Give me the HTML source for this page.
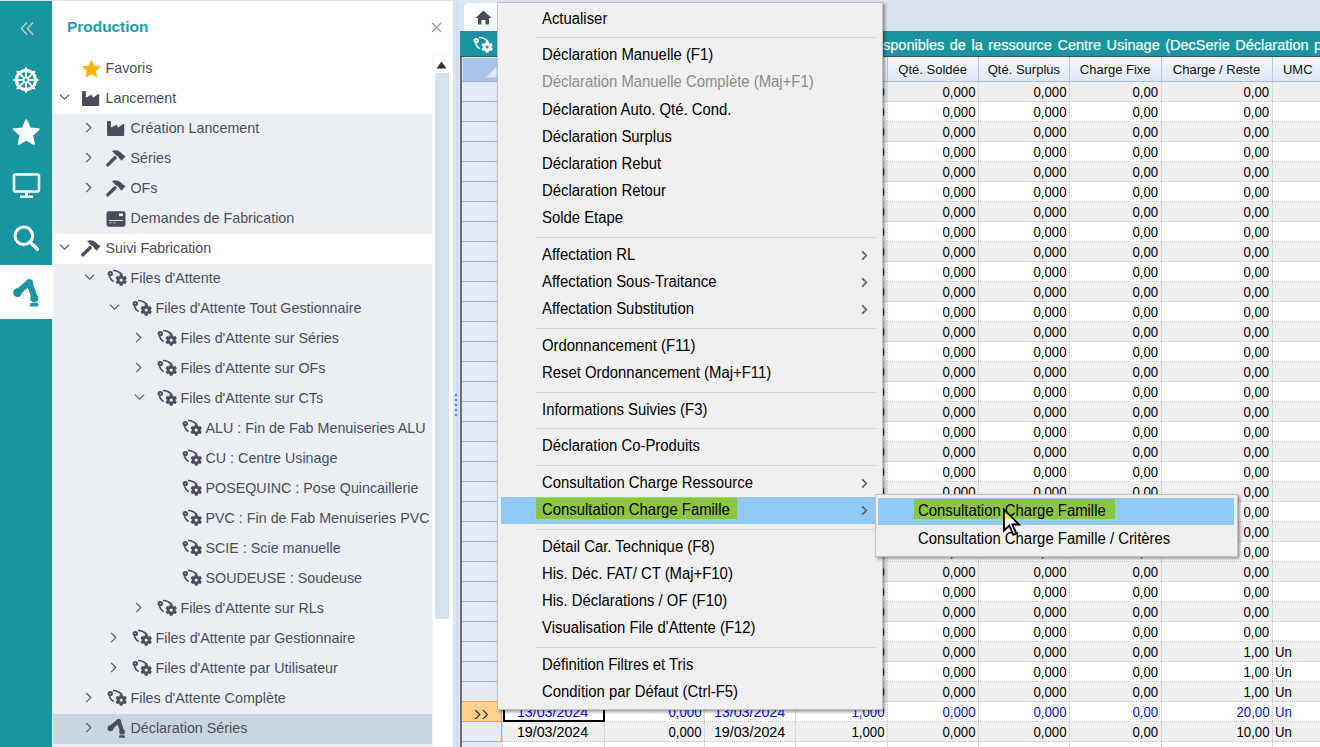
<!DOCTYPE html><html><head><meta charset="utf-8"><style>
*{box-sizing:border-box}
html,body{margin:0;padding:0}
body{width:1320px;height:747px;overflow:hidden;position:relative;background:#dfe6ed;font-family:"Liberation Sans",sans-serif}
.abs{position:absolute}
.sb{position:absolute;left:0;top:1px;width:51.5px;height:746px;background:#1796a2}
.panel{position:absolute;left:51.5px;top:1px;width:401px;height:746px;background:#fff;overflow:hidden}
.tr{position:absolute;left:1.5px;width:380px;height:30px;font-size:14.3px;line-height:30px;color:#4b4e5a;white-space:nowrap}
.tr span{position:absolute;top:-0.5px}
.band{background:#ebeff3}
.sel{background:#c9d5df}
.g{position:absolute;height:20px;font-size:13px;line-height:20px;color:#000;white-space:nowrap}
.c{position:absolute;top:0;height:20px;overflow:hidden;font-size:15px;line-height:20px;white-space:nowrap}
.c span{display:inline-block}
.s1{transform:scaleX(0.95);transform-origin:50% 0}
.s2{transform:scaleX(0.88);transform-origin:100% 0}
.s3{transform:scaleX(0.88);transform-origin:0 0}
.r{text-align:right;padding-right:2.5px}
.m{text-align:center}
.menu{position:absolute;background:#f0f0f0;border:1px solid #c2c2c2;box-shadow:2px 2px 3px rgba(0,0,0,0.4)}
.mi{position:absolute;left:0;height:27.2px;font-size:16px;line-height:27.2px;color:#000;white-space:nowrap}
.mi span.t{position:absolute;left:43.5px;top:-0.8px;transform:scaleX(0.93);transform-origin:0 0}
.sep{position:absolute;left:38px;height:1px;background:#d7d7d7}
.chev{position:absolute}
</style></head><body>

<div class="sb">
<svg class="abs" style="left:19px;top:20px" width="16" height="15" viewBox="0 0 16 15"><path d="M8 1.5 L2.5 7.5 L8 13.5 M14 1.5 L8.5 7.5 L14 13.5" fill="none" stroke="#b9c9cc" stroke-width="1.6"/></svg>
<svg class="abs" style="left:12.3px;top:64.8px" width="28" height="28" viewBox="-13 -13 26 26"><circle cx="0" cy="0" r="10.3" fill="#fff"/><path d="M9.00 2.20 L12.60 0.00 L9.00 -2.20 Z" fill="#fff"/><path d="M4.81 7.92 L8.91 8.91 L7.92 4.81 Z" fill="#fff"/><path d="M-2.20 9.00 L0.00 12.60 L2.20 9.00 Z" fill="#fff"/><path d="M-7.92 4.81 L-8.91 8.91 L-4.81 7.92 Z" fill="#fff"/><path d="M-9.00 -2.20 L-12.60 0.00 L-9.00 2.20 Z" fill="#fff"/><path d="M-4.81 -7.92 L-8.91 -8.91 L-7.92 -4.81 Z" fill="#fff"/><path d="M2.20 -9.00 L-0.00 -12.60 L-2.20 -9.00 Z" fill="#fff"/><path d="M7.92 -4.81 L8.91 -8.91 L4.81 -7.92 Z" fill="#fff"/><path d="M3.31 0.79 L7.53 0.99 L6.03 4.63 L2.90 1.78 Z" fill="#1796a2"/><path d="M1.78 2.90 L4.63 6.03 L0.99 7.53 L0.79 3.31 Z" fill="#1796a2"/><path d="M-0.79 3.31 L-0.99 7.53 L-4.63 6.03 L-1.78 2.90 Z" fill="#1796a2"/><path d="M-2.90 1.78 L-6.03 4.63 L-7.53 0.99 L-3.31 0.79 Z" fill="#1796a2"/><path d="M-3.31 -0.79 L-7.53 -0.99 L-6.03 -4.63 L-2.90 -1.78 Z" fill="#1796a2"/><path d="M-1.78 -2.90 L-4.63 -6.03 L-0.99 -7.53 L-0.79 -3.31 Z" fill="#1796a2"/><path d="M0.79 -3.31 L0.99 -7.53 L4.63 -6.03 L1.78 -2.90 Z" fill="#1796a2"/><path d="M2.90 -1.78 L6.03 -4.63 L7.53 -0.99 L3.31 -0.79 Z" fill="#1796a2"/><circle cx="0" cy="0" r="1.5" fill="#1796a2"/></svg>
<svg class="abs" style="left:12px;top:117px" width="30" height="30" viewBox="0 0 30 30"><path d="M14.30,2.30 L17.83,10.45 L26.66,11.28 L20.01,17.15 L21.94,25.82 L14.30,21.30 L6.66,25.82 L8.59,17.15 L1.94,11.28 L10.77,10.45Z" fill="#fff" stroke="#fff" stroke-width="2" stroke-linejoin="round"/></svg>
<svg class="abs" style="left:12px;top:171px" width="30" height="28" viewBox="0 0 30 28"><rect x="2" y="2.5" width="25" height="17" rx="1.5" fill="none" stroke="#fff" stroke-width="2.6"/><rect x="13" y="20" width="3" height="4" fill="#fff"/><rect x="8" y="23.5" width="13" height="2.4" fill="#fff"/></svg>
<svg class="abs" style="left:11px;top:221.5px" width="30" height="30" viewBox="0 0 30 30"><circle cx="12.8" cy="12.8" r="8.8" fill="none" stroke="#fff" stroke-width="3.1"/><line x1="19" y1="19" x2="26.3" y2="26.3" stroke="#fff" stroke-width="3.5" stroke-linecap="round"/></svg>
<div class="abs" style="left:0;top:263.8px;width:51.5px;height:54px;background:#fff"></div>
</div>
<svg class="abs" style="left:10.80px;top:274.60px" width="30.45" height="33.35" viewBox="0 0 21 23"><g fill="#1796a2" stroke="#1796a2"><circle cx="4.5" cy="12.2" r="3" stroke="none"/><path d="M6.3 10.4 L12.5 5.2" stroke-width="4.2" stroke-linecap="round"/><circle cx="12.7" cy="5.4" r="2.5" stroke="none"/><path d="M12.9 6 L15.9 14.6" stroke-width="4.2" stroke-linecap="round"/><circle cx="16.1" cy="16" r="2.8" stroke="none"/><path d="M13.5 19.2 L18.5 19.2 L19 21.8 L13 21.8Z" stroke="none"/></g></svg>
<div class="panel">
<div class="abs" style="left:15.6px;top:15.5px;font-size:15.4px;font-weight:bold;color:#1c9cb2;line-height:20px">Production</div>
<svg class="abs" style="left:379.5px;top:21px" width="11" height="11" viewBox="0 0 11 11"><path d="M1 1 L10 10 M10 1 L1 10" stroke="#949ca3" stroke-width="1.2"/></svg>
<div class="tr " style="top:52.5px">
<svg class="abs" style="left:28.5px;top:5.0px" width="20" height="20" viewBox="0 0 20 20"><path d="M9.30,2.00 L11.65,7.36 L17.48,7.94 L13.10,11.84 L14.35,17.56 L9.30,14.60 L4.25,17.56 L5.50,11.84 L1.12,7.94 L6.95,7.36Z" fill="#ffb400" stroke="#ffb400" stroke-width="1.2" stroke-linejoin="round"/></svg>
<span style="left:52.5px">Favoris</span>
</div>
<div class="tr " style="top:82.5px">
<svg class="abs" style="left:6.0px;top:10.5px" width="12" height="8" viewBox="0 0 12 8"><path d="M1 0.6 L5.6 5.2 L10.2 0.6" fill="none" stroke="#5a5e6a" stroke-width="1.2"/></svg>
<svg class="abs" style="left:29.0px;top:7.3px" width="19" height="16" viewBox="0 0 19 16"><path d="M0 1 Q0 0 1 0 L2.9 0 Q3.9 0 3.9 1 L3.9 6.4 L9.2 3.9 Q9.7 3.7 10 4.2 L11 6.4 L16.5 3 Q17.2 2.7 17.2 3.5 L17.2 14 Q17.2 15 16.2 15 L1 15 Q0 15 0 14Z" fill="#4a4e5b"/></svg>
<span style="left:52.5px">Lancement</span>
</div>
<div class="tr band" style="top:112.5px">
<svg class="abs" style="left:32.0px;top:8.5px" width="8" height="12" viewBox="0 0 8 12"><path d="M1.2 1 L5.8 5.6 L1.2 10.2" fill="none" stroke="#5a5e6a" stroke-width="1.2"/></svg>
<svg class="abs" style="left:54.0px;top:7.3px" width="19" height="16" viewBox="0 0 19 16"><path d="M0 1 Q0 0 1 0 L2.9 0 Q3.9 0 3.9 1 L3.9 6.4 L9.2 3.9 Q9.7 3.7 10 4.2 L11 6.4 L16.5 3 Q17.2 2.7 17.2 3.5 L17.2 14 Q17.2 15 16.2 15 L1 15 Q0 15 0 14Z" fill="#4a4e5b"/></svg>
<span style="left:77.5px">Création Lancement</span>
</div>
<div class="tr band" style="top:142.5px">
<svg class="abs" style="left:32.0px;top:8.5px" width="8" height="12" viewBox="0 0 8 12"><path d="M1.2 1 L5.8 5.6 L1.2 10.2" fill="none" stroke="#5a5e6a" stroke-width="1.2"/></svg>
<svg class="abs" style="left:51.0px;top:3.5px" width="23" height="21" viewBox="0 0 23 21"><path d="M3.8 17.9 L11 10.8" stroke="#4a4e5b" stroke-width="3.4" stroke-linecap="round"/><path d="M8 4.3 Q12 1.5 17 5.5 L18.3 7 L21.5 9.3 L17.5 13.8 L15.5 11.5 Q13 8 11.8 8.3 Q10 5.6 8 4.3Z" fill="#4a4e5b"/></svg>
<span style="left:77.5px">Séries</span>
</div>
<div class="tr band" style="top:172.5px">
<svg class="abs" style="left:32.0px;top:8.5px" width="8" height="12" viewBox="0 0 8 12"><path d="M1.2 1 L5.8 5.6 L1.2 10.2" fill="none" stroke="#5a5e6a" stroke-width="1.2"/></svg>
<svg class="abs" style="left:51.0px;top:3.5px" width="23" height="21" viewBox="0 0 23 21"><path d="M3.8 17.9 L11 10.8" stroke="#4a4e5b" stroke-width="3.4" stroke-linecap="round"/><path d="M8 4.3 Q12 1.5 17 5.5 L18.3 7 L21.5 9.3 L17.5 13.8 L15.5 11.5 Q13 8 11.8 8.3 Q10 5.6 8 4.3Z" fill="#4a4e5b"/></svg>
<span style="left:77.5px">OFs</span>
</div>
<div class="tr band" style="top:202.5px">
<svg class="abs" style="left:52.8px;top:7.0px" width="20" height="16" viewBox="0 0 20 16"><rect x="0.5" y="0.3" width="19" height="15.4" rx="2" fill="#4a4e5b"/><rect x="13" y="2.5" width="4" height="2.6" fill="#fff" opacity="0.9"/><rect x="3" y="9" width="14" height="1" fill="#fff" opacity="0.8"/><rect x="3" y="11.3" width="3" height="1" fill="#fff" opacity="0.5"/><rect x="7" y="11.3" width="3" height="1" fill="#fff" opacity="0.5"/></svg>
<span style="left:77.5px">Demandes de Fabrication</span>
</div>
<div class="tr " style="top:232.5px">
<svg class="abs" style="left:6.0px;top:10.5px" width="12" height="8" viewBox="0 0 12 8"><path d="M1 0.6 L5.6 5.2 L10.2 0.6" fill="none" stroke="#5a5e6a" stroke-width="1.2"/></svg>
<svg class="abs" style="left:26.0px;top:3.5px" width="23" height="21" viewBox="0 0 23 21"><path d="M3.8 17.9 L11 10.8" stroke="#4a4e5b" stroke-width="3.4" stroke-linecap="round"/><path d="M8 4.3 Q12 1.5 17 5.5 L18.3 7 L21.5 9.3 L17.5 13.8 L15.5 11.5 Q13 8 11.8 8.3 Q10 5.6 8 4.3Z" fill="#4a4e5b"/></svg>
<span style="left:52.5px">Suivi Fabrication</span>
</div>
<div class="tr band" style="top:262.5px">
<svg class="abs" style="left:31.0px;top:10.5px" width="12" height="8" viewBox="0 0 12 8"><path d="M1 0.6 L5.6 5.2 L10.2 0.6" fill="none" stroke="#5a5e6a" stroke-width="1.2"/></svg>
<svg class="abs" style="left:53.0px;top:4.5px" width="23" height="20" viewBox="0 0 23 20"><path d="M7 2.4 Q11.5 2.2 16 6.4" fill="none" stroke="#4a4e5b" stroke-width="1.50"/><path d="M3.3 8.3 Q4.6 11.6 7.6 13.6" fill="none" stroke="#4a4e5b" stroke-width="1.70"/><circle cx="4.3" cy="5.6" r="2.7" fill="#4a4e5b"/><circle cx="4.3" cy="5.6" r="0.7" fill="#ebeff3"/><path d="M13.45,8.17 L13.87,6.35 L16.53,6.35 L16.95,8.17 L17.73,8.62 L19.51,8.08 L20.84,10.38 L19.48,11.65 L19.48,12.55 L20.84,13.82 L19.51,16.12 L17.73,15.58 L16.95,16.03 L16.53,17.85 L13.87,17.85 L13.45,16.03 L12.67,15.58 L10.89,16.12 L9.56,13.82 L10.92,12.55 L10.92,11.65 L9.56,10.38 L10.89,8.08 L12.67,8.62Z" fill="#4a4e5b"/><circle cx="15.2" cy="12.1" r="1.6" fill="#ebeff3"/></svg>
<span style="left:77.5px">Files d&#39;Attente</span>
</div>
<div class="tr band" style="top:292.5px">
<svg class="abs" style="left:56.0px;top:10.5px" width="12" height="8" viewBox="0 0 12 8"><path d="M1 0.6 L5.6 5.2 L10.2 0.6" fill="none" stroke="#5a5e6a" stroke-width="1.2"/></svg>
<svg class="abs" style="left:78.0px;top:4.5px" width="23" height="20" viewBox="0 0 23 20"><path d="M7 2.4 Q11.5 2.2 16 6.4" fill="none" stroke="#4a4e5b" stroke-width="1.50"/><path d="M3.3 8.3 Q4.6 11.6 7.6 13.6" fill="none" stroke="#4a4e5b" stroke-width="1.70"/><circle cx="4.3" cy="5.6" r="2.7" fill="#4a4e5b"/><circle cx="4.3" cy="5.6" r="0.7" fill="#ebeff3"/><path d="M13.45,8.17 L13.87,6.35 L16.53,6.35 L16.95,8.17 L17.73,8.62 L19.51,8.08 L20.84,10.38 L19.48,11.65 L19.48,12.55 L20.84,13.82 L19.51,16.12 L17.73,15.58 L16.95,16.03 L16.53,17.85 L13.87,17.85 L13.45,16.03 L12.67,15.58 L10.89,16.12 L9.56,13.82 L10.92,12.55 L10.92,11.65 L9.56,10.38 L10.89,8.08 L12.67,8.62Z" fill="#4a4e5b"/><circle cx="15.2" cy="12.1" r="1.6" fill="#ebeff3"/></svg>
<span style="left:102.5px">Files d&#39;Attente Tout Gestionnaire</span>
</div>
<div class="tr band" style="top:322.5px">
<svg class="abs" style="left:82.0px;top:8.5px" width="8" height="12" viewBox="0 0 8 12"><path d="M1.2 1 L5.8 5.6 L1.2 10.2" fill="none" stroke="#5a5e6a" stroke-width="1.2"/></svg>
<svg class="abs" style="left:103.0px;top:4.5px" width="23" height="20" viewBox="0 0 23 20"><path d="M7 2.4 Q11.5 2.2 16 6.4" fill="none" stroke="#4a4e5b" stroke-width="1.50"/><path d="M3.3 8.3 Q4.6 11.6 7.6 13.6" fill="none" stroke="#4a4e5b" stroke-width="1.70"/><circle cx="4.3" cy="5.6" r="2.7" fill="#4a4e5b"/><circle cx="4.3" cy="5.6" r="0.7" fill="#ebeff3"/><path d="M13.45,8.17 L13.87,6.35 L16.53,6.35 L16.95,8.17 L17.73,8.62 L19.51,8.08 L20.84,10.38 L19.48,11.65 L19.48,12.55 L20.84,13.82 L19.51,16.12 L17.73,15.58 L16.95,16.03 L16.53,17.85 L13.87,17.85 L13.45,16.03 L12.67,15.58 L10.89,16.12 L9.56,13.82 L10.92,12.55 L10.92,11.65 L9.56,10.38 L10.89,8.08 L12.67,8.62Z" fill="#4a4e5b"/><circle cx="15.2" cy="12.1" r="1.6" fill="#ebeff3"/></svg>
<span style="left:127.5px">Files d&#39;Attente sur Séries</span>
</div>
<div class="tr band" style="top:352.5px">
<svg class="abs" style="left:82.0px;top:8.5px" width="8" height="12" viewBox="0 0 8 12"><path d="M1.2 1 L5.8 5.6 L1.2 10.2" fill="none" stroke="#5a5e6a" stroke-width="1.2"/></svg>
<svg class="abs" style="left:103.0px;top:4.5px" width="23" height="20" viewBox="0 0 23 20"><path d="M7 2.4 Q11.5 2.2 16 6.4" fill="none" stroke="#4a4e5b" stroke-width="1.50"/><path d="M3.3 8.3 Q4.6 11.6 7.6 13.6" fill="none" stroke="#4a4e5b" stroke-width="1.70"/><circle cx="4.3" cy="5.6" r="2.7" fill="#4a4e5b"/><circle cx="4.3" cy="5.6" r="0.7" fill="#ebeff3"/><path d="M13.45,8.17 L13.87,6.35 L16.53,6.35 L16.95,8.17 L17.73,8.62 L19.51,8.08 L20.84,10.38 L19.48,11.65 L19.48,12.55 L20.84,13.82 L19.51,16.12 L17.73,15.58 L16.95,16.03 L16.53,17.85 L13.87,17.85 L13.45,16.03 L12.67,15.58 L10.89,16.12 L9.56,13.82 L10.92,12.55 L10.92,11.65 L9.56,10.38 L10.89,8.08 L12.67,8.62Z" fill="#4a4e5b"/><circle cx="15.2" cy="12.1" r="1.6" fill="#ebeff3"/></svg>
<span style="left:127.5px">Files d&#39;Attente sur OFs</span>
</div>
<div class="tr band" style="top:382.5px">
<svg class="abs" style="left:81.0px;top:10.5px" width="12" height="8" viewBox="0 0 12 8"><path d="M1 0.6 L5.6 5.2 L10.2 0.6" fill="none" stroke="#5a5e6a" stroke-width="1.2"/></svg>
<svg class="abs" style="left:103.0px;top:4.5px" width="23" height="20" viewBox="0 0 23 20"><path d="M7 2.4 Q11.5 2.2 16 6.4" fill="none" stroke="#4a4e5b" stroke-width="1.50"/><path d="M3.3 8.3 Q4.6 11.6 7.6 13.6" fill="none" stroke="#4a4e5b" stroke-width="1.70"/><circle cx="4.3" cy="5.6" r="2.7" fill="#4a4e5b"/><circle cx="4.3" cy="5.6" r="0.7" fill="#ebeff3"/><path d="M13.45,8.17 L13.87,6.35 L16.53,6.35 L16.95,8.17 L17.73,8.62 L19.51,8.08 L20.84,10.38 L19.48,11.65 L19.48,12.55 L20.84,13.82 L19.51,16.12 L17.73,15.58 L16.95,16.03 L16.53,17.85 L13.87,17.85 L13.45,16.03 L12.67,15.58 L10.89,16.12 L9.56,13.82 L10.92,12.55 L10.92,11.65 L9.56,10.38 L10.89,8.08 L12.67,8.62Z" fill="#4a4e5b"/><circle cx="15.2" cy="12.1" r="1.6" fill="#ebeff3"/></svg>
<span style="left:127.5px">Files d&#39;Attente sur CTs</span>
</div>
<div class="tr band" style="top:412.5px">
<svg class="abs" style="left:128.0px;top:4.5px" width="23" height="20" viewBox="0 0 23 20"><path d="M7 2.4 Q11.5 2.2 16 6.4" fill="none" stroke="#4a4e5b" stroke-width="1.50"/><path d="M3.3 8.3 Q4.6 11.6 7.6 13.6" fill="none" stroke="#4a4e5b" stroke-width="1.70"/><circle cx="4.3" cy="5.6" r="2.7" fill="#4a4e5b"/><circle cx="4.3" cy="5.6" r="0.7" fill="#ebeff3"/><path d="M13.45,8.17 L13.87,6.35 L16.53,6.35 L16.95,8.17 L17.73,8.62 L19.51,8.08 L20.84,10.38 L19.48,11.65 L19.48,12.55 L20.84,13.82 L19.51,16.12 L17.73,15.58 L16.95,16.03 L16.53,17.85 L13.87,17.85 L13.45,16.03 L12.67,15.58 L10.89,16.12 L9.56,13.82 L10.92,12.55 L10.92,11.65 L9.56,10.38 L10.89,8.08 L12.67,8.62Z" fill="#4a4e5b"/><circle cx="15.2" cy="12.1" r="1.6" fill="#ebeff3"/></svg>
<span style="left:152.5px">ALU : Fin de Fab Menuiseries ALU</span>
</div>
<div class="tr band" style="top:442.5px">
<svg class="abs" style="left:128.0px;top:4.5px" width="23" height="20" viewBox="0 0 23 20"><path d="M7 2.4 Q11.5 2.2 16 6.4" fill="none" stroke="#4a4e5b" stroke-width="1.50"/><path d="M3.3 8.3 Q4.6 11.6 7.6 13.6" fill="none" stroke="#4a4e5b" stroke-width="1.70"/><circle cx="4.3" cy="5.6" r="2.7" fill="#4a4e5b"/><circle cx="4.3" cy="5.6" r="0.7" fill="#ebeff3"/><path d="M13.45,8.17 L13.87,6.35 L16.53,6.35 L16.95,8.17 L17.73,8.62 L19.51,8.08 L20.84,10.38 L19.48,11.65 L19.48,12.55 L20.84,13.82 L19.51,16.12 L17.73,15.58 L16.95,16.03 L16.53,17.85 L13.87,17.85 L13.45,16.03 L12.67,15.58 L10.89,16.12 L9.56,13.82 L10.92,12.55 L10.92,11.65 L9.56,10.38 L10.89,8.08 L12.67,8.62Z" fill="#4a4e5b"/><circle cx="15.2" cy="12.1" r="1.6" fill="#ebeff3"/></svg>
<span style="left:152.5px">CU : Centre Usinage</span>
</div>
<div class="tr band" style="top:472.5px">
<svg class="abs" style="left:128.0px;top:4.5px" width="23" height="20" viewBox="0 0 23 20"><path d="M7 2.4 Q11.5 2.2 16 6.4" fill="none" stroke="#4a4e5b" stroke-width="1.50"/><path d="M3.3 8.3 Q4.6 11.6 7.6 13.6" fill="none" stroke="#4a4e5b" stroke-width="1.70"/><circle cx="4.3" cy="5.6" r="2.7" fill="#4a4e5b"/><circle cx="4.3" cy="5.6" r="0.7" fill="#ebeff3"/><path d="M13.45,8.17 L13.87,6.35 L16.53,6.35 L16.95,8.17 L17.73,8.62 L19.51,8.08 L20.84,10.38 L19.48,11.65 L19.48,12.55 L20.84,13.82 L19.51,16.12 L17.73,15.58 L16.95,16.03 L16.53,17.85 L13.87,17.85 L13.45,16.03 L12.67,15.58 L10.89,16.12 L9.56,13.82 L10.92,12.55 L10.92,11.65 L9.56,10.38 L10.89,8.08 L12.67,8.62Z" fill="#4a4e5b"/><circle cx="15.2" cy="12.1" r="1.6" fill="#ebeff3"/></svg>
<span style="left:152.5px">POSEQUINC : Pose Quincaillerie</span>
</div>
<div class="tr band" style="top:502.5px">
<svg class="abs" style="left:128.0px;top:4.5px" width="23" height="20" viewBox="0 0 23 20"><path d="M7 2.4 Q11.5 2.2 16 6.4" fill="none" stroke="#4a4e5b" stroke-width="1.50"/><path d="M3.3 8.3 Q4.6 11.6 7.6 13.6" fill="none" stroke="#4a4e5b" stroke-width="1.70"/><circle cx="4.3" cy="5.6" r="2.7" fill="#4a4e5b"/><circle cx="4.3" cy="5.6" r="0.7" fill="#ebeff3"/><path d="M13.45,8.17 L13.87,6.35 L16.53,6.35 L16.95,8.17 L17.73,8.62 L19.51,8.08 L20.84,10.38 L19.48,11.65 L19.48,12.55 L20.84,13.82 L19.51,16.12 L17.73,15.58 L16.95,16.03 L16.53,17.85 L13.87,17.85 L13.45,16.03 L12.67,15.58 L10.89,16.12 L9.56,13.82 L10.92,12.55 L10.92,11.65 L9.56,10.38 L10.89,8.08 L12.67,8.62Z" fill="#4a4e5b"/><circle cx="15.2" cy="12.1" r="1.6" fill="#ebeff3"/></svg>
<span style="left:152.5px">PVC : Fin de Fab Menuiseries PVC</span>
</div>
<div class="tr band" style="top:532.5px">
<svg class="abs" style="left:128.0px;top:4.5px" width="23" height="20" viewBox="0 0 23 20"><path d="M7 2.4 Q11.5 2.2 16 6.4" fill="none" stroke="#4a4e5b" stroke-width="1.50"/><path d="M3.3 8.3 Q4.6 11.6 7.6 13.6" fill="none" stroke="#4a4e5b" stroke-width="1.70"/><circle cx="4.3" cy="5.6" r="2.7" fill="#4a4e5b"/><circle cx="4.3" cy="5.6" r="0.7" fill="#ebeff3"/><path d="M13.45,8.17 L13.87,6.35 L16.53,6.35 L16.95,8.17 L17.73,8.62 L19.51,8.08 L20.84,10.38 L19.48,11.65 L19.48,12.55 L20.84,13.82 L19.51,16.12 L17.73,15.58 L16.95,16.03 L16.53,17.85 L13.87,17.85 L13.45,16.03 L12.67,15.58 L10.89,16.12 L9.56,13.82 L10.92,12.55 L10.92,11.65 L9.56,10.38 L10.89,8.08 L12.67,8.62Z" fill="#4a4e5b"/><circle cx="15.2" cy="12.1" r="1.6" fill="#ebeff3"/></svg>
<span style="left:152.5px">SCIE : Scie manuelle</span>
</div>
<div class="tr band" style="top:562.5px">
<svg class="abs" style="left:128.0px;top:4.5px" width="23" height="20" viewBox="0 0 23 20"><path d="M7 2.4 Q11.5 2.2 16 6.4" fill="none" stroke="#4a4e5b" stroke-width="1.50"/><path d="M3.3 8.3 Q4.6 11.6 7.6 13.6" fill="none" stroke="#4a4e5b" stroke-width="1.70"/><circle cx="4.3" cy="5.6" r="2.7" fill="#4a4e5b"/><circle cx="4.3" cy="5.6" r="0.7" fill="#ebeff3"/><path d="M13.45,8.17 L13.87,6.35 L16.53,6.35 L16.95,8.17 L17.73,8.62 L19.51,8.08 L20.84,10.38 L19.48,11.65 L19.48,12.55 L20.84,13.82 L19.51,16.12 L17.73,15.58 L16.95,16.03 L16.53,17.85 L13.87,17.85 L13.45,16.03 L12.67,15.58 L10.89,16.12 L9.56,13.82 L10.92,12.55 L10.92,11.65 L9.56,10.38 L10.89,8.08 L12.67,8.62Z" fill="#4a4e5b"/><circle cx="15.2" cy="12.1" r="1.6" fill="#ebeff3"/></svg>
<span style="left:152.5px">SOUDEUSE : Soudeuse</span>
</div>
<div class="tr band" style="top:592.5px">
<svg class="abs" style="left:82.0px;top:8.5px" width="8" height="12" viewBox="0 0 8 12"><path d="M1.2 1 L5.8 5.6 L1.2 10.2" fill="none" stroke="#5a5e6a" stroke-width="1.2"/></svg>
<svg class="abs" style="left:103.0px;top:4.5px" width="23" height="20" viewBox="0 0 23 20"><path d="M7 2.4 Q11.5 2.2 16 6.4" fill="none" stroke="#4a4e5b" stroke-width="1.50"/><path d="M3.3 8.3 Q4.6 11.6 7.6 13.6" fill="none" stroke="#4a4e5b" stroke-width="1.70"/><circle cx="4.3" cy="5.6" r="2.7" fill="#4a4e5b"/><circle cx="4.3" cy="5.6" r="0.7" fill="#ebeff3"/><path d="M13.45,8.17 L13.87,6.35 L16.53,6.35 L16.95,8.17 L17.73,8.62 L19.51,8.08 L20.84,10.38 L19.48,11.65 L19.48,12.55 L20.84,13.82 L19.51,16.12 L17.73,15.58 L16.95,16.03 L16.53,17.85 L13.87,17.85 L13.45,16.03 L12.67,15.58 L10.89,16.12 L9.56,13.82 L10.92,12.55 L10.92,11.65 L9.56,10.38 L10.89,8.08 L12.67,8.62Z" fill="#4a4e5b"/><circle cx="15.2" cy="12.1" r="1.6" fill="#ebeff3"/></svg>
<span style="left:127.5px">Files d&#39;Attente sur RLs</span>
</div>
<div class="tr band" style="top:622.5px">
<svg class="abs" style="left:57.0px;top:8.5px" width="8" height="12" viewBox="0 0 8 12"><path d="M1.2 1 L5.8 5.6 L1.2 10.2" fill="none" stroke="#5a5e6a" stroke-width="1.2"/></svg>
<svg class="abs" style="left:78.0px;top:4.5px" width="23" height="20" viewBox="0 0 23 20"><path d="M7 2.4 Q11.5 2.2 16 6.4" fill="none" stroke="#4a4e5b" stroke-width="1.50"/><path d="M3.3 8.3 Q4.6 11.6 7.6 13.6" fill="none" stroke="#4a4e5b" stroke-width="1.70"/><circle cx="4.3" cy="5.6" r="2.7" fill="#4a4e5b"/><circle cx="4.3" cy="5.6" r="0.7" fill="#ebeff3"/><path d="M13.45,8.17 L13.87,6.35 L16.53,6.35 L16.95,8.17 L17.73,8.62 L19.51,8.08 L20.84,10.38 L19.48,11.65 L19.48,12.55 L20.84,13.82 L19.51,16.12 L17.73,15.58 L16.95,16.03 L16.53,17.85 L13.87,17.85 L13.45,16.03 L12.67,15.58 L10.89,16.12 L9.56,13.82 L10.92,12.55 L10.92,11.65 L9.56,10.38 L10.89,8.08 L12.67,8.62Z" fill="#4a4e5b"/><circle cx="15.2" cy="12.1" r="1.6" fill="#ebeff3"/></svg>
<span style="left:102.5px">Files d&#39;Attente par Gestionnaire</span>
</div>
<div class="tr band" style="top:652.5px">
<svg class="abs" style="left:57.0px;top:8.5px" width="8" height="12" viewBox="0 0 8 12"><path d="M1.2 1 L5.8 5.6 L1.2 10.2" fill="none" stroke="#5a5e6a" stroke-width="1.2"/></svg>
<svg class="abs" style="left:78.0px;top:4.5px" width="23" height="20" viewBox="0 0 23 20"><path d="M7 2.4 Q11.5 2.2 16 6.4" fill="none" stroke="#4a4e5b" stroke-width="1.50"/><path d="M3.3 8.3 Q4.6 11.6 7.6 13.6" fill="none" stroke="#4a4e5b" stroke-width="1.70"/><circle cx="4.3" cy="5.6" r="2.7" fill="#4a4e5b"/><circle cx="4.3" cy="5.6" r="0.7" fill="#ebeff3"/><path d="M13.45,8.17 L13.87,6.35 L16.53,6.35 L16.95,8.17 L17.73,8.62 L19.51,8.08 L20.84,10.38 L19.48,11.65 L19.48,12.55 L20.84,13.82 L19.51,16.12 L17.73,15.58 L16.95,16.03 L16.53,17.85 L13.87,17.85 L13.45,16.03 L12.67,15.58 L10.89,16.12 L9.56,13.82 L10.92,12.55 L10.92,11.65 L9.56,10.38 L10.89,8.08 L12.67,8.62Z" fill="#4a4e5b"/><circle cx="15.2" cy="12.1" r="1.6" fill="#ebeff3"/></svg>
<span style="left:102.5px">Files d&#39;Attente par Utilisateur</span>
</div>
<div class="tr band" style="top:682.5px">
<svg class="abs" style="left:32.0px;top:8.5px" width="8" height="12" viewBox="0 0 8 12"><path d="M1.2 1 L5.8 5.6 L1.2 10.2" fill="none" stroke="#5a5e6a" stroke-width="1.2"/></svg>
<svg class="abs" style="left:53.0px;top:4.5px" width="23" height="20" viewBox="0 0 23 20"><path d="M7 2.4 Q11.5 2.2 16 6.4" fill="none" stroke="#4a4e5b" stroke-width="1.50"/><path d="M3.3 8.3 Q4.6 11.6 7.6 13.6" fill="none" stroke="#4a4e5b" stroke-width="1.70"/><circle cx="4.3" cy="5.6" r="2.7" fill="#4a4e5b"/><circle cx="4.3" cy="5.6" r="0.7" fill="#ebeff3"/><path d="M13.45,8.17 L13.87,6.35 L16.53,6.35 L16.95,8.17 L17.73,8.62 L19.51,8.08 L20.84,10.38 L19.48,11.65 L19.48,12.55 L20.84,13.82 L19.51,16.12 L17.73,15.58 L16.95,16.03 L16.53,17.85 L13.87,17.85 L13.45,16.03 L12.67,15.58 L10.89,16.12 L9.56,13.82 L10.92,12.55 L10.92,11.65 L9.56,10.38 L10.89,8.08 L12.67,8.62Z" fill="#4a4e5b"/><circle cx="15.2" cy="12.1" r="1.6" fill="#ebeff3"/></svg>
<span style="left:77.5px">Files d&#39;Attente Complète</span>
</div>
<div class="tr sel" style="top:712.5px">
<svg class="abs" style="left:32.0px;top:8.5px" width="8" height="12" viewBox="0 0 8 12"><path d="M1.2 1 L5.8 5.6 L1.2 10.2" fill="none" stroke="#5a5e6a" stroke-width="1.2"/></svg>
<svg class="abs" style="left:53.00px;top:2.50px" width="21.00" height="23.00" viewBox="0 0 21 23"><g fill="#4a4e5b" stroke="#4a4e5b"><circle cx="4.5" cy="12.2" r="3" stroke="none"/><path d="M6.3 10.4 L12.5 5.2" stroke-width="4.2" stroke-linecap="round"/><circle cx="12.7" cy="5.4" r="2.5" stroke="none"/><path d="M12.9 6 L15.9 14.6" stroke-width="4.2" stroke-linecap="round"/><circle cx="16.1" cy="16" r="2.8" stroke="none"/><path d="M13.5 19.2 L18.5 19.2 L19 21.8 L13 21.8Z" stroke="none"/></g></svg>
<span style="left:77.5px">Déclaration Séries</span>
</div>
<div class="tr band" style="top:742.5px">
</div>
<div class="abs" style="left:380px;top:52.5px;width:21px;height:694px;background:#fff;border-left:1px solid #f4f6f8;border-top:1px solid #f4f6f8"></div>
<svg class="abs" style="left:384.5px;top:60px" width="11" height="8" viewBox="0 0 11 8"><path d="M0.5 7.5 L5.5 0.5 L10.5 7.5Z" fill="#333"/></svg>
<div class="abs" style="left:383.7px;top:72.2px;width:13.8px;height:546.2px;background:#d8e2ea"></div>
</div>
<div class="abs" style="left:452.5px;top:0;width:3.5px;height:747px;background:#dde5ec"></div>
<div class="abs" style="left:456px;top:1px;width:2.5px;height:746px;background:#cfe0f6"></div>
<div class="abs" style="left:454.5px;top:394.3px;width:2px;height:2px;background:#3d7fd8;transform:rotate(-45deg)"></div>
<div class="abs" style="left:454.5px;top:399.3px;width:2px;height:2px;background:#3d7fd8;transform:rotate(-45deg)"></div>
<div class="abs" style="left:454.5px;top:404.3px;width:2px;height:2px;background:#3d7fd8;transform:rotate(-45deg)"></div>
<div class="abs" style="left:454.5px;top:409.3px;width:2px;height:2px;background:#3d7fd8;transform:rotate(-45deg)"></div>
<div class="abs" style="left:454.5px;top:414.3px;width:2px;height:2px;background:#3d7fd8;transform:rotate(-45deg)"></div>
<div class="abs" style="left:460px;top:1px;width:860px;height:30px;background:#dae3ec"></div>
<div class="abs" style="left:463.5px;top:2.5px;width:60px;height:28.5px;background:#fff;border-radius:5px 0 0 0"></div>
<svg class="abs" style="left:475px;top:10px" width="17" height="15" viewBox="0 0 17 15"><path d="M8.5 0.5 L16.5 8 L14 8 L14 14.5 L10.5 14.5 L10.5 10 L6.5 10 L6.5 14.5 L3 14.5 L3 8 L0.5 8Z" fill="#4a4e5b"/></svg>
<div class="abs" style="left:460px;top:31px;width:860px;height:25.5px;background:#1796a2;overflow:hidden">
<svg class="abs" style="left:12.0px;top:4.0px" width="23" height="20" viewBox="0 0 23 20"><path d="M7 2.4 Q11.5 2.2 16 6.4" fill="none" stroke="#fff" stroke-width="1.35"/><path d="M3.3 8.3 Q4.6 11.6 7.6 13.6" fill="none" stroke="#fff" stroke-width="1.53"/><circle cx="4.3" cy="5.6" r="2.7" fill="#fff"/><circle cx="4.3" cy="5.6" r="0.7" fill="#1796a2"/><path d="M13.45,8.17 L13.87,6.35 L16.53,6.35 L16.95,8.17 L17.73,8.62 L19.51,8.08 L20.84,10.38 L19.48,11.65 L19.48,12.55 L20.84,13.82 L19.51,16.12 L17.73,15.58 L16.95,16.03 L16.53,17.85 L13.87,17.85 L13.45,16.03 L12.67,15.58 L10.89,16.12 L9.56,13.82 L10.92,12.55 L10.92,11.65 L9.56,10.38 L10.89,8.08 L12.67,8.62Z" fill="#fff"/><circle cx="15.2" cy="12.1" r="1.6" fill="#1796a2"/></svg>
<div class="abs" style="left:40px;top:1.5px;line-height:25px;font-size:14.5px;color:#f4f8f0;white-space:nowrap;word-spacing:1.5px">Files d&#39;Attente Opérations di</div>
<div class="abs" style="left:423px;top:1.5px;line-height:25px;font-size:14.5px;color:#f4f8f0;white-space:nowrap;word-spacing:1.5px;-webkit-text-stroke:0.25px #f4f8f0">sponibles de la ressource Centre Usinage (DecSerie Déclaration par Série)</div>
</div>
<div class="abs" style="left:460px;top:56px;width:860px;height:1px;background:#3b5a60"></div>
<div class="abs" style="left:460px;top:57px;width:860px;height:690px;background:#fff;overflow:hidden">
<div class="abs" style="left:0;top:0;width:1.5px;height:690px;background:#6f6f6f"></div>
<div class="abs" style="left:1.5px;top:0;width:40.5px;height:25px;background:#a9c4e9;border-top:1.6px solid #d6e2f2;border-left:1px solid #d6e2f2"></div>
<svg class="abs" style="left:26px;top:10px" width="11" height="11" viewBox="0 0 11 11"><path d="M10.5 0 L10.5 10.5 L0 10.5Z" fill="#e2eaf6"/></svg>
<div class="abs" style="left:42px;top:0;width:818px;height:24.5px;background:linear-gradient(#f7f9fc,#dde6f1);border-bottom:1px solid #a6bdd6"></div>
<div class="abs" style="left:1.5px;top:24px;width:40.5px;height:1px;background:#9db3cc"></div>
<div class="abs" style="left:42.0px;top:0;width:102.0px;height:24.5px;font-size:13px;line-height:26px;color:#111;text-align:center;white-space:nowrap;overflow:hidden">Date Début</div>
<div class="abs" style="left:143.5px;top:0;width:1px;height:24.5px;background:#b3c7dc"></div>
<div class="abs" style="left:144.0px;top:0;width:100.5px;height:24.5px;font-size:13px;line-height:26px;color:#111;text-align:center;white-space:nowrap;overflow:hidden">Qté. Prévue</div>
<div class="abs" style="left:244.0px;top:0;width:1px;height:24.5px;background:#b3c7dc"></div>
<div class="abs" style="left:244.5px;top:0;width:90.5px;height:24.5px;font-size:13px;line-height:26px;color:#111;text-align:center;white-space:nowrap;overflow:hidden">Date Fin</div>
<div class="abs" style="left:334.5px;top:0;width:1px;height:24.5px;background:#b3c7dc"></div>
<div class="abs" style="left:335.0px;top:0;width:92.0px;height:24.5px;font-size:13px;line-height:26px;color:#111;text-align:center;white-space:nowrap;overflow:hidden">Qté. Lancée</div>
<div class="abs" style="left:426.5px;top:0;width:1px;height:24.5px;background:#b3c7dc"></div>
<div class="abs" style="left:427.0px;top:0;width:91.4px;height:24.5px;font-size:13px;line-height:26px;color:#111;text-align:center;white-space:nowrap;overflow:hidden">Qté. Soldée</div>
<div class="abs" style="left:517.9px;top:0;width:1px;height:24.5px;background:#b3c7dc"></div>
<div class="abs" style="left:518.4px;top:0;width:91.0px;height:24.5px;font-size:13px;line-height:26px;color:#111;text-align:center;white-space:nowrap;overflow:hidden">Qté. Surplus</div>
<div class="abs" style="left:608.9px;top:0;width:1px;height:24.5px;background:#b3c7dc"></div>
<div class="abs" style="left:609.4px;top:0;width:91.6px;height:24.5px;font-size:13px;line-height:26px;color:#111;text-align:center;white-space:nowrap;overflow:hidden">Charge Fixe</div>
<div class="abs" style="left:700.5px;top:0;width:1px;height:24.5px;background:#b3c7dc"></div>
<div class="abs" style="left:701.0px;top:0;width:111.0px;height:24.5px;font-size:13px;line-height:26px;color:#111;text-align:center;white-space:nowrap;overflow:hidden">Charge / Reste</div>
<div class="abs" style="left:811.5px;top:0;width:1px;height:24.5px;background:#b3c7dc"></div>
<div class="abs" style="left:812.0px;top:0;width:51.5px;height:24.5px;font-size:13px;line-height:26px;color:#111;text-align:center;white-space:nowrap;overflow:hidden">UMC</div>
<div class="abs" style="left:863.0px;top:0;width:1px;height:24.5px;background:#b3c7dc"></div>
<div class="abs" style="left:42px;top:25px;width:818px;height:20px;background:#efefef"></div>
<div class="abs" style="left:1.5px;top:25px;width:40.5px;height:20px;background:#e3eaf6;border-bottom:1px solid #9db3cc"></div>
<div class="c m" style="left:42.0px;top:25px;width:102.0px;color:#000;"><span class="s1">19/03/2024</span></div>
<div class="c r" style="left:144.0px;top:25px;width:100.5px;color:#000;"><span class="s2">0,000</span></div>
<div class="c m" style="left:244.5px;top:25px;width:90.5px;color:#000;"><span class="s1">19/03/2024</span></div>
<div class="c r" style="left:335.0px;top:25px;width:92.0px;color:#000;"><span class="s2">1,000</span></div>
<div class="c r" style="left:427.0px;top:25px;width:91.4px;color:#000;"><span class="s2">0,000</span></div>
<div class="c r" style="left:518.4px;top:25px;width:91.0px;color:#000;"><span class="s2">0,000</span></div>
<div class="c r" style="left:609.4px;top:25px;width:91.6px;color:#000;"><span class="s2">0,00</span></div>
<div class="c r" style="left:701.0px;top:25px;width:111.0px;color:#000;"><span class="s2">0,00</span></div>
<div class="abs" style="left:42px;top:44px;width:818px;height:1px;background-image:linear-gradient(90deg,#c4c4c4 50%,transparent 50%);background-size:2px 1px"></div>
<div class="abs" style="left:42px;top:45px;width:818px;height:20px;background:#fff"></div>
<div class="abs" style="left:1.5px;top:45px;width:40.5px;height:20px;background:#e3eaf6;border-bottom:1px solid #9db3cc"></div>
<div class="c m" style="left:42.0px;top:45px;width:102.0px;color:#000;"><span class="s1">19/03/2024</span></div>
<div class="c r" style="left:144.0px;top:45px;width:100.5px;color:#000;"><span class="s2">0,000</span></div>
<div class="c m" style="left:244.5px;top:45px;width:90.5px;color:#000;"><span class="s1">19/03/2024</span></div>
<div class="c r" style="left:335.0px;top:45px;width:92.0px;color:#000;"><span class="s2">1,000</span></div>
<div class="c r" style="left:427.0px;top:45px;width:91.4px;color:#000;"><span class="s2">0,000</span></div>
<div class="c r" style="left:518.4px;top:45px;width:91.0px;color:#000;"><span class="s2">0,000</span></div>
<div class="c r" style="left:609.4px;top:45px;width:91.6px;color:#000;"><span class="s2">0,00</span></div>
<div class="c r" style="left:701.0px;top:45px;width:111.0px;color:#000;"><span class="s2">0,00</span></div>
<div class="abs" style="left:42px;top:64px;width:818px;height:1px;background-image:linear-gradient(90deg,#c4c4c4 50%,transparent 50%);background-size:2px 1px"></div>
<div class="abs" style="left:42px;top:65px;width:818px;height:20px;background:#efefef"></div>
<div class="abs" style="left:1.5px;top:65px;width:40.5px;height:20px;background:#e3eaf6;border-bottom:1px solid #9db3cc"></div>
<div class="c m" style="left:42.0px;top:65px;width:102.0px;color:#000;"><span class="s1">19/03/2024</span></div>
<div class="c r" style="left:144.0px;top:65px;width:100.5px;color:#000;"><span class="s2">0,000</span></div>
<div class="c m" style="left:244.5px;top:65px;width:90.5px;color:#000;"><span class="s1">19/03/2024</span></div>
<div class="c r" style="left:335.0px;top:65px;width:92.0px;color:#000;"><span class="s2">1,000</span></div>
<div class="c r" style="left:427.0px;top:65px;width:91.4px;color:#000;"><span class="s2">0,000</span></div>
<div class="c r" style="left:518.4px;top:65px;width:91.0px;color:#000;"><span class="s2">0,000</span></div>
<div class="c r" style="left:609.4px;top:65px;width:91.6px;color:#000;"><span class="s2">0,00</span></div>
<div class="c r" style="left:701.0px;top:65px;width:111.0px;color:#000;"><span class="s2">0,00</span></div>
<div class="abs" style="left:42px;top:84px;width:818px;height:1px;background-image:linear-gradient(90deg,#c4c4c4 50%,transparent 50%);background-size:2px 1px"></div>
<div class="abs" style="left:42px;top:85px;width:818px;height:20px;background:#fff"></div>
<div class="abs" style="left:1.5px;top:85px;width:40.5px;height:20px;background:#e3eaf6;border-bottom:1px solid #9db3cc"></div>
<div class="c m" style="left:42.0px;top:85px;width:102.0px;color:#000;"><span class="s1">19/03/2024</span></div>
<div class="c r" style="left:144.0px;top:85px;width:100.5px;color:#000;"><span class="s2">0,000</span></div>
<div class="c m" style="left:244.5px;top:85px;width:90.5px;color:#000;"><span class="s1">19/03/2024</span></div>
<div class="c r" style="left:335.0px;top:85px;width:92.0px;color:#000;"><span class="s2">1,000</span></div>
<div class="c r" style="left:427.0px;top:85px;width:91.4px;color:#000;"><span class="s2">0,000</span></div>
<div class="c r" style="left:518.4px;top:85px;width:91.0px;color:#000;"><span class="s2">0,000</span></div>
<div class="c r" style="left:609.4px;top:85px;width:91.6px;color:#000;"><span class="s2">0,00</span></div>
<div class="c r" style="left:701.0px;top:85px;width:111.0px;color:#000;"><span class="s2">0,00</span></div>
<div class="abs" style="left:42px;top:104px;width:818px;height:1px;background-image:linear-gradient(90deg,#c4c4c4 50%,transparent 50%);background-size:2px 1px"></div>
<div class="abs" style="left:42px;top:105px;width:818px;height:20px;background:#efefef"></div>
<div class="abs" style="left:1.5px;top:105px;width:40.5px;height:20px;background:#e3eaf6;border-bottom:1px solid #9db3cc"></div>
<div class="c m" style="left:42.0px;top:105px;width:102.0px;color:#000;"><span class="s1">19/03/2024</span></div>
<div class="c r" style="left:144.0px;top:105px;width:100.5px;color:#000;"><span class="s2">0,000</span></div>
<div class="c m" style="left:244.5px;top:105px;width:90.5px;color:#000;"><span class="s1">19/03/2024</span></div>
<div class="c r" style="left:335.0px;top:105px;width:92.0px;color:#000;"><span class="s2">1,000</span></div>
<div class="c r" style="left:427.0px;top:105px;width:91.4px;color:#000;"><span class="s2">0,000</span></div>
<div class="c r" style="left:518.4px;top:105px;width:91.0px;color:#000;"><span class="s2">0,000</span></div>
<div class="c r" style="left:609.4px;top:105px;width:91.6px;color:#000;"><span class="s2">0,00</span></div>
<div class="c r" style="left:701.0px;top:105px;width:111.0px;color:#000;"><span class="s2">0,00</span></div>
<div class="abs" style="left:42px;top:124px;width:818px;height:1px;background-image:linear-gradient(90deg,#c4c4c4 50%,transparent 50%);background-size:2px 1px"></div>
<div class="abs" style="left:42px;top:125px;width:818px;height:20px;background:#fff"></div>
<div class="abs" style="left:1.5px;top:125px;width:40.5px;height:20px;background:#e3eaf6;border-bottom:1px solid #9db3cc"></div>
<div class="c m" style="left:42.0px;top:125px;width:102.0px;color:#000;"><span class="s1">19/03/2024</span></div>
<div class="c r" style="left:144.0px;top:125px;width:100.5px;color:#000;"><span class="s2">0,000</span></div>
<div class="c m" style="left:244.5px;top:125px;width:90.5px;color:#000;"><span class="s1">19/03/2024</span></div>
<div class="c r" style="left:335.0px;top:125px;width:92.0px;color:#000;"><span class="s2">1,000</span></div>
<div class="c r" style="left:427.0px;top:125px;width:91.4px;color:#000;"><span class="s2">0,000</span></div>
<div class="c r" style="left:518.4px;top:125px;width:91.0px;color:#000;"><span class="s2">0,000</span></div>
<div class="c r" style="left:609.4px;top:125px;width:91.6px;color:#000;"><span class="s2">0,00</span></div>
<div class="c r" style="left:701.0px;top:125px;width:111.0px;color:#000;"><span class="s2">0,00</span></div>
<div class="abs" style="left:42px;top:144px;width:818px;height:1px;background-image:linear-gradient(90deg,#c4c4c4 50%,transparent 50%);background-size:2px 1px"></div>
<div class="abs" style="left:42px;top:145px;width:818px;height:20px;background:#efefef"></div>
<div class="abs" style="left:1.5px;top:145px;width:40.5px;height:20px;background:#e3eaf6;border-bottom:1px solid #9db3cc"></div>
<div class="c m" style="left:42.0px;top:145px;width:102.0px;color:#000;"><span class="s1">19/03/2024</span></div>
<div class="c r" style="left:144.0px;top:145px;width:100.5px;color:#000;"><span class="s2">0,000</span></div>
<div class="c m" style="left:244.5px;top:145px;width:90.5px;color:#000;"><span class="s1">19/03/2024</span></div>
<div class="c r" style="left:335.0px;top:145px;width:92.0px;color:#000;"><span class="s2">1,000</span></div>
<div class="c r" style="left:427.0px;top:145px;width:91.4px;color:#000;"><span class="s2">0,000</span></div>
<div class="c r" style="left:518.4px;top:145px;width:91.0px;color:#000;"><span class="s2">0,000</span></div>
<div class="c r" style="left:609.4px;top:145px;width:91.6px;color:#000;"><span class="s2">0,00</span></div>
<div class="c r" style="left:701.0px;top:145px;width:111.0px;color:#000;"><span class="s2">0,00</span></div>
<div class="abs" style="left:42px;top:164px;width:818px;height:1px;background-image:linear-gradient(90deg,#c4c4c4 50%,transparent 50%);background-size:2px 1px"></div>
<div class="abs" style="left:42px;top:165px;width:818px;height:20px;background:#fff"></div>
<div class="abs" style="left:1.5px;top:165px;width:40.5px;height:20px;background:#e3eaf6;border-bottom:1px solid #9db3cc"></div>
<div class="c m" style="left:42.0px;top:165px;width:102.0px;color:#000;"><span class="s1">19/03/2024</span></div>
<div class="c r" style="left:144.0px;top:165px;width:100.5px;color:#000;"><span class="s2">0,000</span></div>
<div class="c m" style="left:244.5px;top:165px;width:90.5px;color:#000;"><span class="s1">19/03/2024</span></div>
<div class="c r" style="left:335.0px;top:165px;width:92.0px;color:#000;"><span class="s2">1,000</span></div>
<div class="c r" style="left:427.0px;top:165px;width:91.4px;color:#000;"><span class="s2">0,000</span></div>
<div class="c r" style="left:518.4px;top:165px;width:91.0px;color:#000;"><span class="s2">0,000</span></div>
<div class="c r" style="left:609.4px;top:165px;width:91.6px;color:#000;"><span class="s2">0,00</span></div>
<div class="c r" style="left:701.0px;top:165px;width:111.0px;color:#000;"><span class="s2">0,00</span></div>
<div class="abs" style="left:42px;top:184px;width:818px;height:1px;background-image:linear-gradient(90deg,#c4c4c4 50%,transparent 50%);background-size:2px 1px"></div>
<div class="abs" style="left:42px;top:185px;width:818px;height:20px;background:#efefef"></div>
<div class="abs" style="left:1.5px;top:185px;width:40.5px;height:20px;background:#e3eaf6;border-bottom:1px solid #9db3cc"></div>
<div class="c m" style="left:42.0px;top:185px;width:102.0px;color:#000;"><span class="s1">19/03/2024</span></div>
<div class="c r" style="left:144.0px;top:185px;width:100.5px;color:#000;"><span class="s2">0,000</span></div>
<div class="c m" style="left:244.5px;top:185px;width:90.5px;color:#000;"><span class="s1">19/03/2024</span></div>
<div class="c r" style="left:335.0px;top:185px;width:92.0px;color:#000;"><span class="s2">1,000</span></div>
<div class="c r" style="left:427.0px;top:185px;width:91.4px;color:#000;"><span class="s2">0,000</span></div>
<div class="c r" style="left:518.4px;top:185px;width:91.0px;color:#000;"><span class="s2">0,000</span></div>
<div class="c r" style="left:609.4px;top:185px;width:91.6px;color:#000;"><span class="s2">0,00</span></div>
<div class="c r" style="left:701.0px;top:185px;width:111.0px;color:#000;"><span class="s2">0,00</span></div>
<div class="abs" style="left:42px;top:204px;width:818px;height:1px;background-image:linear-gradient(90deg,#c4c4c4 50%,transparent 50%);background-size:2px 1px"></div>
<div class="abs" style="left:42px;top:205px;width:818px;height:20px;background:#fff"></div>
<div class="abs" style="left:1.5px;top:205px;width:40.5px;height:20px;background:#e3eaf6;border-bottom:1px solid #9db3cc"></div>
<div class="c m" style="left:42.0px;top:205px;width:102.0px;color:#000;"><span class="s1">19/03/2024</span></div>
<div class="c r" style="left:144.0px;top:205px;width:100.5px;color:#000;"><span class="s2">0,000</span></div>
<div class="c m" style="left:244.5px;top:205px;width:90.5px;color:#000;"><span class="s1">19/03/2024</span></div>
<div class="c r" style="left:335.0px;top:205px;width:92.0px;color:#000;"><span class="s2">1,000</span></div>
<div class="c r" style="left:427.0px;top:205px;width:91.4px;color:#000;"><span class="s2">0,000</span></div>
<div class="c r" style="left:518.4px;top:205px;width:91.0px;color:#000;"><span class="s2">0,000</span></div>
<div class="c r" style="left:609.4px;top:205px;width:91.6px;color:#000;"><span class="s2">0,00</span></div>
<div class="c r" style="left:701.0px;top:205px;width:111.0px;color:#000;"><span class="s2">0,00</span></div>
<div class="abs" style="left:42px;top:224px;width:818px;height:1px;background-image:linear-gradient(90deg,#c4c4c4 50%,transparent 50%);background-size:2px 1px"></div>
<div class="abs" style="left:42px;top:225px;width:818px;height:20px;background:#efefef"></div>
<div class="abs" style="left:1.5px;top:225px;width:40.5px;height:20px;background:#e3eaf6;border-bottom:1px solid #9db3cc"></div>
<div class="c m" style="left:42.0px;top:225px;width:102.0px;color:#000;"><span class="s1">19/03/2024</span></div>
<div class="c r" style="left:144.0px;top:225px;width:100.5px;color:#000;"><span class="s2">0,000</span></div>
<div class="c m" style="left:244.5px;top:225px;width:90.5px;color:#000;"><span class="s1">19/03/2024</span></div>
<div class="c r" style="left:335.0px;top:225px;width:92.0px;color:#000;"><span class="s2">1,000</span></div>
<div class="c r" style="left:427.0px;top:225px;width:91.4px;color:#000;"><span class="s2">0,000</span></div>
<div class="c r" style="left:518.4px;top:225px;width:91.0px;color:#000;"><span class="s2">0,000</span></div>
<div class="c r" style="left:609.4px;top:225px;width:91.6px;color:#000;"><span class="s2">0,00</span></div>
<div class="c r" style="left:701.0px;top:225px;width:111.0px;color:#000;"><span class="s2">0,00</span></div>
<div class="abs" style="left:42px;top:244px;width:818px;height:1px;background-image:linear-gradient(90deg,#c4c4c4 50%,transparent 50%);background-size:2px 1px"></div>
<div class="abs" style="left:42px;top:245px;width:818px;height:20px;background:#fff"></div>
<div class="abs" style="left:1.5px;top:245px;width:40.5px;height:20px;background:#e3eaf6;border-bottom:1px solid #9db3cc"></div>
<div class="c m" style="left:42.0px;top:245px;width:102.0px;color:#000;"><span class="s1">19/03/2024</span></div>
<div class="c r" style="left:144.0px;top:245px;width:100.5px;color:#000;"><span class="s2">0,000</span></div>
<div class="c m" style="left:244.5px;top:245px;width:90.5px;color:#000;"><span class="s1">19/03/2024</span></div>
<div class="c r" style="left:335.0px;top:245px;width:92.0px;color:#000;"><span class="s2">1,000</span></div>
<div class="c r" style="left:427.0px;top:245px;width:91.4px;color:#000;"><span class="s2">0,000</span></div>
<div class="c r" style="left:518.4px;top:245px;width:91.0px;color:#000;"><span class="s2">0,000</span></div>
<div class="c r" style="left:609.4px;top:245px;width:91.6px;color:#000;"><span class="s2">0,00</span></div>
<div class="c r" style="left:701.0px;top:245px;width:111.0px;color:#000;"><span class="s2">0,00</span></div>
<div class="abs" style="left:42px;top:264px;width:818px;height:1px;background-image:linear-gradient(90deg,#c4c4c4 50%,transparent 50%);background-size:2px 1px"></div>
<div class="abs" style="left:42px;top:265px;width:818px;height:20px;background:#efefef"></div>
<div class="abs" style="left:1.5px;top:265px;width:40.5px;height:20px;background:#e3eaf6;border-bottom:1px solid #9db3cc"></div>
<div class="c m" style="left:42.0px;top:265px;width:102.0px;color:#000;"><span class="s1">19/03/2024</span></div>
<div class="c r" style="left:144.0px;top:265px;width:100.5px;color:#000;"><span class="s2">0,000</span></div>
<div class="c m" style="left:244.5px;top:265px;width:90.5px;color:#000;"><span class="s1">19/03/2024</span></div>
<div class="c r" style="left:335.0px;top:265px;width:92.0px;color:#000;"><span class="s2">1,000</span></div>
<div class="c r" style="left:427.0px;top:265px;width:91.4px;color:#000;"><span class="s2">0,000</span></div>
<div class="c r" style="left:518.4px;top:265px;width:91.0px;color:#000;"><span class="s2">0,000</span></div>
<div class="c r" style="left:609.4px;top:265px;width:91.6px;color:#000;"><span class="s2">0,00</span></div>
<div class="c r" style="left:701.0px;top:265px;width:111.0px;color:#000;"><span class="s2">0,00</span></div>
<div class="abs" style="left:42px;top:284px;width:818px;height:1px;background-image:linear-gradient(90deg,#c4c4c4 50%,transparent 50%);background-size:2px 1px"></div>
<div class="abs" style="left:42px;top:285px;width:818px;height:20px;background:#fff"></div>
<div class="abs" style="left:1.5px;top:285px;width:40.5px;height:20px;background:#e3eaf6;border-bottom:1px solid #9db3cc"></div>
<div class="c m" style="left:42.0px;top:285px;width:102.0px;color:#000;"><span class="s1">19/03/2024</span></div>
<div class="c r" style="left:144.0px;top:285px;width:100.5px;color:#000;"><span class="s2">0,000</span></div>
<div class="c m" style="left:244.5px;top:285px;width:90.5px;color:#000;"><span class="s1">19/03/2024</span></div>
<div class="c r" style="left:335.0px;top:285px;width:92.0px;color:#000;"><span class="s2">1,000</span></div>
<div class="c r" style="left:427.0px;top:285px;width:91.4px;color:#000;"><span class="s2">0,000</span></div>
<div class="c r" style="left:518.4px;top:285px;width:91.0px;color:#000;"><span class="s2">0,000</span></div>
<div class="c r" style="left:609.4px;top:285px;width:91.6px;color:#000;"><span class="s2">0,00</span></div>
<div class="c r" style="left:701.0px;top:285px;width:111.0px;color:#000;"><span class="s2">0,00</span></div>
<div class="abs" style="left:42px;top:304px;width:818px;height:1px;background-image:linear-gradient(90deg,#c4c4c4 50%,transparent 50%);background-size:2px 1px"></div>
<div class="abs" style="left:42px;top:305px;width:818px;height:20px;background:#efefef"></div>
<div class="abs" style="left:1.5px;top:305px;width:40.5px;height:20px;background:#e3eaf6;border-bottom:1px solid #9db3cc"></div>
<div class="c m" style="left:42.0px;top:305px;width:102.0px;color:#000;"><span class="s1">19/03/2024</span></div>
<div class="c r" style="left:144.0px;top:305px;width:100.5px;color:#000;"><span class="s2">0,000</span></div>
<div class="c m" style="left:244.5px;top:305px;width:90.5px;color:#000;"><span class="s1">19/03/2024</span></div>
<div class="c r" style="left:335.0px;top:305px;width:92.0px;color:#000;"><span class="s2">1,000</span></div>
<div class="c r" style="left:427.0px;top:305px;width:91.4px;color:#000;"><span class="s2">0,000</span></div>
<div class="c r" style="left:518.4px;top:305px;width:91.0px;color:#000;"><span class="s2">0,000</span></div>
<div class="c r" style="left:609.4px;top:305px;width:91.6px;color:#000;"><span class="s2">0,00</span></div>
<div class="c r" style="left:701.0px;top:305px;width:111.0px;color:#000;"><span class="s2">0,00</span></div>
<div class="abs" style="left:42px;top:324px;width:818px;height:1px;background-image:linear-gradient(90deg,#c4c4c4 50%,transparent 50%);background-size:2px 1px"></div>
<div class="abs" style="left:42px;top:325px;width:818px;height:20px;background:#fff"></div>
<div class="abs" style="left:1.5px;top:325px;width:40.5px;height:20px;background:#e3eaf6;border-bottom:1px solid #9db3cc"></div>
<div class="c m" style="left:42.0px;top:325px;width:102.0px;color:#000;"><span class="s1">19/03/2024</span></div>
<div class="c r" style="left:144.0px;top:325px;width:100.5px;color:#000;"><span class="s2">0,000</span></div>
<div class="c m" style="left:244.5px;top:325px;width:90.5px;color:#000;"><span class="s1">19/03/2024</span></div>
<div class="c r" style="left:335.0px;top:325px;width:92.0px;color:#000;"><span class="s2">1,000</span></div>
<div class="c r" style="left:427.0px;top:325px;width:91.4px;color:#000;"><span class="s2">0,000</span></div>
<div class="c r" style="left:518.4px;top:325px;width:91.0px;color:#000;"><span class="s2">0,000</span></div>
<div class="c r" style="left:609.4px;top:325px;width:91.6px;color:#000;"><span class="s2">0,00</span></div>
<div class="c r" style="left:701.0px;top:325px;width:111.0px;color:#000;"><span class="s2">0,00</span></div>
<div class="abs" style="left:42px;top:344px;width:818px;height:1px;background-image:linear-gradient(90deg,#c4c4c4 50%,transparent 50%);background-size:2px 1px"></div>
<div class="abs" style="left:42px;top:345px;width:818px;height:20px;background:#efefef"></div>
<div class="abs" style="left:1.5px;top:345px;width:40.5px;height:20px;background:#e3eaf6;border-bottom:1px solid #9db3cc"></div>
<div class="c m" style="left:42.0px;top:345px;width:102.0px;color:#000;"><span class="s1">19/03/2024</span></div>
<div class="c r" style="left:144.0px;top:345px;width:100.5px;color:#000;"><span class="s2">0,000</span></div>
<div class="c m" style="left:244.5px;top:345px;width:90.5px;color:#000;"><span class="s1">19/03/2024</span></div>
<div class="c r" style="left:335.0px;top:345px;width:92.0px;color:#000;"><span class="s2">1,000</span></div>
<div class="c r" style="left:427.0px;top:345px;width:91.4px;color:#000;"><span class="s2">0,000</span></div>
<div class="c r" style="left:518.4px;top:345px;width:91.0px;color:#000;"><span class="s2">0,000</span></div>
<div class="c r" style="left:609.4px;top:345px;width:91.6px;color:#000;"><span class="s2">0,00</span></div>
<div class="c r" style="left:701.0px;top:345px;width:111.0px;color:#000;"><span class="s2">0,00</span></div>
<div class="abs" style="left:42px;top:364px;width:818px;height:1px;background-image:linear-gradient(90deg,#c4c4c4 50%,transparent 50%);background-size:2px 1px"></div>
<div class="abs" style="left:42px;top:365px;width:818px;height:20px;background:#fff"></div>
<div class="abs" style="left:1.5px;top:365px;width:40.5px;height:20px;background:#e3eaf6;border-bottom:1px solid #9db3cc"></div>
<div class="c m" style="left:42.0px;top:365px;width:102.0px;color:#000;"><span class="s1">19/03/2024</span></div>
<div class="c r" style="left:144.0px;top:365px;width:100.5px;color:#000;"><span class="s2">0,000</span></div>
<div class="c m" style="left:244.5px;top:365px;width:90.5px;color:#000;"><span class="s1">19/03/2024</span></div>
<div class="c r" style="left:335.0px;top:365px;width:92.0px;color:#000;"><span class="s2">1,000</span></div>
<div class="c r" style="left:427.0px;top:365px;width:91.4px;color:#000;"><span class="s2">0,000</span></div>
<div class="c r" style="left:518.4px;top:365px;width:91.0px;color:#000;"><span class="s2">0,000</span></div>
<div class="c r" style="left:609.4px;top:365px;width:91.6px;color:#000;"><span class="s2">0,00</span></div>
<div class="c r" style="left:701.0px;top:365px;width:111.0px;color:#000;"><span class="s2">0,00</span></div>
<div class="abs" style="left:42px;top:384px;width:818px;height:1px;background-image:linear-gradient(90deg,#c4c4c4 50%,transparent 50%);background-size:2px 1px"></div>
<div class="abs" style="left:42px;top:385px;width:818px;height:20px;background:#efefef"></div>
<div class="abs" style="left:1.5px;top:385px;width:40.5px;height:20px;background:#e3eaf6;border-bottom:1px solid #9db3cc"></div>
<div class="c m" style="left:42.0px;top:385px;width:102.0px;color:#000;"><span class="s1">19/03/2024</span></div>
<div class="c r" style="left:144.0px;top:385px;width:100.5px;color:#000;"><span class="s2">0,000</span></div>
<div class="c m" style="left:244.5px;top:385px;width:90.5px;color:#000;"><span class="s1">19/03/2024</span></div>
<div class="c r" style="left:335.0px;top:385px;width:92.0px;color:#000;"><span class="s2">1,000</span></div>
<div class="c r" style="left:427.0px;top:385px;width:91.4px;color:#000;"><span class="s2">0,000</span></div>
<div class="c r" style="left:518.4px;top:385px;width:91.0px;color:#000;"><span class="s2">0,000</span></div>
<div class="c r" style="left:609.4px;top:385px;width:91.6px;color:#000;"><span class="s2">0,00</span></div>
<div class="c r" style="left:701.0px;top:385px;width:111.0px;color:#000;"><span class="s2">0,00</span></div>
<div class="abs" style="left:42px;top:404px;width:818px;height:1px;background-image:linear-gradient(90deg,#c4c4c4 50%,transparent 50%);background-size:2px 1px"></div>
<div class="abs" style="left:42px;top:405px;width:818px;height:20px;background:#fff"></div>
<div class="abs" style="left:1.5px;top:405px;width:40.5px;height:20px;background:#e3eaf6;border-bottom:1px solid #9db3cc"></div>
<div class="c m" style="left:42.0px;top:405px;width:102.0px;color:#000;"><span class="s1">19/03/2024</span></div>
<div class="c r" style="left:144.0px;top:405px;width:100.5px;color:#000;"><span class="s2">0,000</span></div>
<div class="c m" style="left:244.5px;top:405px;width:90.5px;color:#000;"><span class="s1">19/03/2024</span></div>
<div class="c r" style="left:335.0px;top:405px;width:92.0px;color:#000;"><span class="s2">1,000</span></div>
<div class="c r" style="left:427.0px;top:405px;width:91.4px;color:#000;"><span class="s2">0,000</span></div>
<div class="c r" style="left:518.4px;top:405px;width:91.0px;color:#000;"><span class="s2">0,000</span></div>
<div class="c r" style="left:609.4px;top:405px;width:91.6px;color:#000;"><span class="s2">0,00</span></div>
<div class="c r" style="left:701.0px;top:405px;width:111.0px;color:#000;"><span class="s2">0,00</span></div>
<div class="abs" style="left:42px;top:424px;width:818px;height:1px;background-image:linear-gradient(90deg,#c4c4c4 50%,transparent 50%);background-size:2px 1px"></div>
<div class="abs" style="left:42px;top:425px;width:818px;height:20px;background:#efefef"></div>
<div class="abs" style="left:1.5px;top:425px;width:40.5px;height:20px;background:#e3eaf6;border-bottom:1px solid #9db3cc"></div>
<div class="c m" style="left:42.0px;top:425px;width:102.0px;color:#000;"><span class="s1">19/03/2024</span></div>
<div class="c r" style="left:144.0px;top:425px;width:100.5px;color:#000;"><span class="s2">0,000</span></div>
<div class="c m" style="left:244.5px;top:425px;width:90.5px;color:#000;"><span class="s1">19/03/2024</span></div>
<div class="c r" style="left:335.0px;top:425px;width:92.0px;color:#000;"><span class="s2">1,000</span></div>
<div class="c r" style="left:427.0px;top:425px;width:91.4px;color:#000;"><span class="s2">0,000</span></div>
<div class="c r" style="left:518.4px;top:425px;width:91.0px;color:#000;"><span class="s2">0,000</span></div>
<div class="c r" style="left:609.4px;top:425px;width:91.6px;color:#000;"><span class="s2">0,00</span></div>
<div class="c r" style="left:701.0px;top:425px;width:111.0px;color:#000;"><span class="s2">0,00</span></div>
<div class="abs" style="left:42px;top:444px;width:818px;height:1px;background-image:linear-gradient(90deg,#c4c4c4 50%,transparent 50%);background-size:2px 1px"></div>
<div class="abs" style="left:42px;top:445px;width:818px;height:20px;background:#fff"></div>
<div class="abs" style="left:1.5px;top:445px;width:40.5px;height:20px;background:#e3eaf6;border-bottom:1px solid #9db3cc"></div>
<div class="c m" style="left:42.0px;top:445px;width:102.0px;color:#000;"><span class="s1">19/03/2024</span></div>
<div class="c r" style="left:144.0px;top:445px;width:100.5px;color:#000;"><span class="s2">0,000</span></div>
<div class="c m" style="left:244.5px;top:445px;width:90.5px;color:#000;"><span class="s1">19/03/2024</span></div>
<div class="c r" style="left:335.0px;top:445px;width:92.0px;color:#000;"><span class="s2">1,000</span></div>
<div class="c r" style="left:427.0px;top:445px;width:91.4px;color:#000;"><span class="s2">0,000</span></div>
<div class="c r" style="left:518.4px;top:445px;width:91.0px;color:#000;"><span class="s2">0,000</span></div>
<div class="c r" style="left:609.4px;top:445px;width:91.6px;color:#000;"><span class="s2">0,00</span></div>
<div class="c r" style="left:701.0px;top:445px;width:111.0px;color:#000;"><span class="s2">0,00</span></div>
<div class="abs" style="left:42px;top:464px;width:818px;height:1px;background-image:linear-gradient(90deg,#c4c4c4 50%,transparent 50%);background-size:2px 1px"></div>
<div class="abs" style="left:42px;top:465px;width:818px;height:20px;background:#efefef"></div>
<div class="abs" style="left:1.5px;top:465px;width:40.5px;height:20px;background:#e3eaf6;border-bottom:1px solid #9db3cc"></div>
<div class="c m" style="left:42.0px;top:465px;width:102.0px;color:#000;"><span class="s1">19/03/2024</span></div>
<div class="c r" style="left:144.0px;top:465px;width:100.5px;color:#000;"><span class="s2">0,000</span></div>
<div class="c m" style="left:244.5px;top:465px;width:90.5px;color:#000;"><span class="s1">19/03/2024</span></div>
<div class="c r" style="left:335.0px;top:465px;width:92.0px;color:#000;"><span class="s2">1,000</span></div>
<div class="c r" style="left:427.0px;top:465px;width:91.4px;color:#000;"><span class="s2">0,000</span></div>
<div class="c r" style="left:518.4px;top:465px;width:91.0px;color:#000;"><span class="s2">0,000</span></div>
<div class="c r" style="left:609.4px;top:465px;width:91.6px;color:#000;"><span class="s2">0,00</span></div>
<div class="c r" style="left:701.0px;top:465px;width:111.0px;color:#000;"><span class="s2">0,00</span></div>
<div class="abs" style="left:42px;top:484px;width:818px;height:1px;background-image:linear-gradient(90deg,#c4c4c4 50%,transparent 50%);background-size:2px 1px"></div>
<div class="abs" style="left:42px;top:485px;width:818px;height:20px;background:#fff"></div>
<div class="abs" style="left:1.5px;top:485px;width:40.5px;height:20px;background:#e3eaf6;border-bottom:1px solid #9db3cc"></div>
<div class="c m" style="left:42.0px;top:485px;width:102.0px;color:#000;"><span class="s1">19/03/2024</span></div>
<div class="c r" style="left:144.0px;top:485px;width:100.5px;color:#000;"><span class="s2">0,000</span></div>
<div class="c m" style="left:244.5px;top:485px;width:90.5px;color:#000;"><span class="s1">19/03/2024</span></div>
<div class="c r" style="left:335.0px;top:485px;width:92.0px;color:#000;"><span class="s2">1,000</span></div>
<div class="c r" style="left:427.0px;top:485px;width:91.4px;color:#000;"><span class="s2">0,000</span></div>
<div class="c r" style="left:518.4px;top:485px;width:91.0px;color:#000;"><span class="s2">0,000</span></div>
<div class="c r" style="left:609.4px;top:485px;width:91.6px;color:#000;"><span class="s2">0,00</span></div>
<div class="c r" style="left:701.0px;top:485px;width:111.0px;color:#000;"><span class="s2">0,00</span></div>
<div class="abs" style="left:42px;top:504px;width:818px;height:1px;background-image:linear-gradient(90deg,#c4c4c4 50%,transparent 50%);background-size:2px 1px"></div>
<div class="abs" style="left:42px;top:505px;width:818px;height:20px;background:#efefef"></div>
<div class="abs" style="left:1.5px;top:505px;width:40.5px;height:20px;background:#e3eaf6;border-bottom:1px solid #9db3cc"></div>
<div class="c m" style="left:42.0px;top:505px;width:102.0px;color:#000;"><span class="s1">19/03/2024</span></div>
<div class="c r" style="left:144.0px;top:505px;width:100.5px;color:#000;"><span class="s2">0,000</span></div>
<div class="c m" style="left:244.5px;top:505px;width:90.5px;color:#000;"><span class="s1">19/03/2024</span></div>
<div class="c r" style="left:335.0px;top:505px;width:92.0px;color:#000;"><span class="s2">1,000</span></div>
<div class="c r" style="left:427.0px;top:505px;width:91.4px;color:#000;"><span class="s2">0,000</span></div>
<div class="c r" style="left:518.4px;top:505px;width:91.0px;color:#000;"><span class="s2">0,000</span></div>
<div class="c r" style="left:609.4px;top:505px;width:91.6px;color:#000;"><span class="s2">0,00</span></div>
<div class="c r" style="left:701.0px;top:505px;width:111.0px;color:#000;"><span class="s2">0,00</span></div>
<div class="abs" style="left:42px;top:524px;width:818px;height:1px;background-image:linear-gradient(90deg,#c4c4c4 50%,transparent 50%);background-size:2px 1px"></div>
<div class="abs" style="left:42px;top:525px;width:818px;height:20px;background:#fff"></div>
<div class="abs" style="left:1.5px;top:525px;width:40.5px;height:20px;background:#e3eaf6;border-bottom:1px solid #9db3cc"></div>
<div class="c m" style="left:42.0px;top:525px;width:102.0px;color:#000;"><span class="s1">19/03/2024</span></div>
<div class="c r" style="left:144.0px;top:525px;width:100.5px;color:#000;"><span class="s2">0,000</span></div>
<div class="c m" style="left:244.5px;top:525px;width:90.5px;color:#000;"><span class="s1">19/03/2024</span></div>
<div class="c r" style="left:335.0px;top:525px;width:92.0px;color:#000;"><span class="s2">1,000</span></div>
<div class="c r" style="left:427.0px;top:525px;width:91.4px;color:#000;"><span class="s2">0,000</span></div>
<div class="c r" style="left:518.4px;top:525px;width:91.0px;color:#000;"><span class="s2">0,000</span></div>
<div class="c r" style="left:609.4px;top:525px;width:91.6px;color:#000;"><span class="s2">0,00</span></div>
<div class="c r" style="left:701.0px;top:525px;width:111.0px;color:#000;"><span class="s2">0,00</span></div>
<div class="abs" style="left:42px;top:544px;width:818px;height:1px;background-image:linear-gradient(90deg,#c4c4c4 50%,transparent 50%);background-size:2px 1px"></div>
<div class="abs" style="left:42px;top:545px;width:818px;height:20px;background:#efefef"></div>
<div class="abs" style="left:1.5px;top:545px;width:40.5px;height:20px;background:#e3eaf6;border-bottom:1px solid #9db3cc"></div>
<div class="c m" style="left:42.0px;top:545px;width:102.0px;color:#000;"><span class="s1">19/03/2024</span></div>
<div class="c r" style="left:144.0px;top:545px;width:100.5px;color:#000;"><span class="s2">0,000</span></div>
<div class="c m" style="left:244.5px;top:545px;width:90.5px;color:#000;"><span class="s1">19/03/2024</span></div>
<div class="c r" style="left:335.0px;top:545px;width:92.0px;color:#000;"><span class="s2">1,000</span></div>
<div class="c r" style="left:427.0px;top:545px;width:91.4px;color:#000;"><span class="s2">0,000</span></div>
<div class="c r" style="left:518.4px;top:545px;width:91.0px;color:#000;"><span class="s2">0,000</span></div>
<div class="c r" style="left:609.4px;top:545px;width:91.6px;color:#000;"><span class="s2">0,00</span></div>
<div class="c r" style="left:701.0px;top:545px;width:111.0px;color:#000;"><span class="s2">0,00</span></div>
<div class="abs" style="left:42px;top:564px;width:818px;height:1px;background-image:linear-gradient(90deg,#c4c4c4 50%,transparent 50%);background-size:2px 1px"></div>
<div class="abs" style="left:42px;top:565px;width:818px;height:20px;background:#fff"></div>
<div class="abs" style="left:1.5px;top:565px;width:40.5px;height:20px;background:#e3eaf6;border-bottom:1px solid #9db3cc"></div>
<div class="c m" style="left:42.0px;top:565px;width:102.0px;color:#000;"><span class="s1">19/03/2024</span></div>
<div class="c r" style="left:144.0px;top:565px;width:100.5px;color:#000;"><span class="s2">0,000</span></div>
<div class="c m" style="left:244.5px;top:565px;width:90.5px;color:#000;"><span class="s1">19/03/2024</span></div>
<div class="c r" style="left:335.0px;top:565px;width:92.0px;color:#000;"><span class="s2">1,000</span></div>
<div class="c r" style="left:427.0px;top:565px;width:91.4px;color:#000;"><span class="s2">0,000</span></div>
<div class="c r" style="left:518.4px;top:565px;width:91.0px;color:#000;"><span class="s2">0,000</span></div>
<div class="c r" style="left:609.4px;top:565px;width:91.6px;color:#000;"><span class="s2">0,00</span></div>
<div class="c r" style="left:701.0px;top:565px;width:111.0px;color:#000;"><span class="s2">0,00</span></div>
<div class="abs" style="left:42px;top:584px;width:818px;height:1px;background-image:linear-gradient(90deg,#c4c4c4 50%,transparent 50%);background-size:2px 1px"></div>
<div class="abs" style="left:42px;top:585px;width:818px;height:20px;background:#efefef"></div>
<div class="abs" style="left:1.5px;top:585px;width:40.5px;height:20px;background:#e3eaf6;border-bottom:1px solid #9db3cc"></div>
<div class="c m" style="left:42.0px;top:585px;width:102.0px;color:#000;"><span class="s1">19/03/2024</span></div>
<div class="c r" style="left:144.0px;top:585px;width:100.5px;color:#000;"><span class="s2">0,000</span></div>
<div class="c m" style="left:244.5px;top:585px;width:90.5px;color:#000;"><span class="s1">19/03/2024</span></div>
<div class="c r" style="left:335.0px;top:585px;width:92.0px;color:#000;"><span class="s2">1,000</span></div>
<div class="c r" style="left:427.0px;top:585px;width:91.4px;color:#000;"><span class="s2">0,000</span></div>
<div class="c r" style="left:518.4px;top:585px;width:91.0px;color:#000;"><span class="s2">0,000</span></div>
<div class="c r" style="left:609.4px;top:585px;width:91.6px;color:#000;"><span class="s2">0,00</span></div>
<div class="c r" style="left:701.0px;top:585px;width:111.0px;color:#000;"><span class="s2">1,00</span></div>
<div class="c " style="left:812.0px;top:585px;width:51.5px;color:#000;padding-left:3px;"><span class="s3">Un</span></div>
<div class="abs" style="left:42px;top:604px;width:818px;height:1px;background-image:linear-gradient(90deg,#c4c4c4 50%,transparent 50%);background-size:2px 1px"></div>
<div class="abs" style="left:42px;top:605px;width:818px;height:20px;background:#fff"></div>
<div class="abs" style="left:1.5px;top:605px;width:40.5px;height:20px;background:#e3eaf6;border-bottom:1px solid #9db3cc"></div>
<div class="c m" style="left:42.0px;top:605px;width:102.0px;color:#000;"><span class="s1">19/03/2024</span></div>
<div class="c r" style="left:144.0px;top:605px;width:100.5px;color:#000;"><span class="s2">0,000</span></div>
<div class="c m" style="left:244.5px;top:605px;width:90.5px;color:#000;"><span class="s1">19/03/2024</span></div>
<div class="c r" style="left:335.0px;top:605px;width:92.0px;color:#000;"><span class="s2">1,000</span></div>
<div class="c r" style="left:427.0px;top:605px;width:91.4px;color:#000;"><span class="s2">0,000</span></div>
<div class="c r" style="left:518.4px;top:605px;width:91.0px;color:#000;"><span class="s2">0,000</span></div>
<div class="c r" style="left:609.4px;top:605px;width:91.6px;color:#000;"><span class="s2">0,00</span></div>
<div class="c r" style="left:701.0px;top:605px;width:111.0px;color:#000;"><span class="s2">1,00</span></div>
<div class="c " style="left:812.0px;top:605px;width:51.5px;color:#000;padding-left:3px;"><span class="s3">Un</span></div>
<div class="abs" style="left:42px;top:624px;width:818px;height:1px;background-image:linear-gradient(90deg,#c4c4c4 50%,transparent 50%);background-size:2px 1px"></div>
<div class="abs" style="left:42px;top:625px;width:818px;height:20px;background:#efefef"></div>
<div class="abs" style="left:1.5px;top:625px;width:40.5px;height:20px;background:#e3eaf6;border-bottom:1px solid #9db3cc"></div>
<div class="c m" style="left:42.0px;top:625px;width:102.0px;color:#000;"><span class="s1">19/03/2024</span></div>
<div class="c r" style="left:144.0px;top:625px;width:100.5px;color:#000;"><span class="s2">0,000</span></div>
<div class="c m" style="left:244.5px;top:625px;width:90.5px;color:#000;"><span class="s1">19/03/2024</span></div>
<div class="c r" style="left:335.0px;top:625px;width:92.0px;color:#000;"><span class="s2">1,000</span></div>
<div class="c r" style="left:427.0px;top:625px;width:91.4px;color:#000;"><span class="s2">0,000</span></div>
<div class="c r" style="left:518.4px;top:625px;width:91.0px;color:#000;"><span class="s2">0,000</span></div>
<div class="c r" style="left:609.4px;top:625px;width:91.6px;color:#000;"><span class="s2">0,00</span></div>
<div class="c r" style="left:701.0px;top:625px;width:111.0px;color:#000;"><span class="s2">1,00</span></div>
<div class="c " style="left:812.0px;top:625px;width:51.5px;color:#000;padding-left:3px;"><span class="s3">Un</span></div>
<div class="abs" style="left:42px;top:644px;width:818px;height:1px;background-image:linear-gradient(90deg,#c4c4c4 50%,transparent 50%);background-size:2px 1px"></div>
<div class="abs" style="left:42px;top:645px;width:818px;height:20px;background:#fff"></div>
<div class="abs" style="left:1.5px;top:644px;width:40.5px;height:21px;background:#fed28c;border-top:1px solid #f4a046;border-bottom:1px solid #f4a046"></div>
<svg class="abs" style="left:14px;top:652px" width="16" height="11" viewBox="0 0 16 11"><path d="M1.3 1 L5.8 5.5 L1.3 10 M8.9 1 L13.4 5.5 L8.9 10" fill="none" stroke="#333" stroke-width="1.1"/></svg>
<div class="c m" style="left:42.0px;top:645px;width:102.0px;color:#0a0aff;"><span class="s1">13/03/2024</span></div>
<div class="c r" style="left:144.0px;top:645px;width:100.5px;color:#0a0aff;"><span class="s2">0,000</span></div>
<div class="c m" style="left:244.5px;top:645px;width:90.5px;color:#0a0aff;"><span class="s1">13/03/2024</span></div>
<div class="c r" style="left:335.0px;top:645px;width:92.0px;color:#0a0aff;"><span class="s2">1,000</span></div>
<div class="c r" style="left:427.0px;top:645px;width:91.4px;color:#0a0aff;"><span class="s2">0,000</span></div>
<div class="c r" style="left:518.4px;top:645px;width:91.0px;color:#0a0aff;"><span class="s2">0,000</span></div>
<div class="c r" style="left:609.4px;top:645px;width:91.6px;color:#0a0aff;"><span class="s2">0,00</span></div>
<div class="c r" style="left:701.0px;top:645px;width:111.0px;color:#0a0aff;"><span class="s2">20,00</span></div>
<div class="c " style="left:812.0px;top:645px;width:51.5px;color:#0a0aff;padding-left:3px;"><span class="s3">Un</span></div>
<div class="abs" style="left:42px;top:664px;width:818px;height:1px;background-image:linear-gradient(90deg,#c4c4c4 50%,transparent 50%);background-size:2px 1px"></div>
<div class="abs" style="left:42px;top:665px;width:818px;height:20px;background:#efefef"></div>
<div class="abs" style="left:1.5px;top:665px;width:40.5px;height:20px;background:#e3eaf6;border-bottom:1px solid #9db3cc"></div>
<div class="c m" style="left:42.0px;top:665px;width:102.0px;color:#000;"><span class="s1">19/03/2024</span></div>
<div class="c r" style="left:144.0px;top:665px;width:100.5px;color:#000;"><span class="s2">0,000</span></div>
<div class="c m" style="left:244.5px;top:665px;width:90.5px;color:#000;"><span class="s1">19/03/2024</span></div>
<div class="c r" style="left:335.0px;top:665px;width:92.0px;color:#000;"><span class="s2">1,000</span></div>
<div class="c r" style="left:427.0px;top:665px;width:91.4px;color:#000;"><span class="s2">0,000</span></div>
<div class="c r" style="left:518.4px;top:665px;width:91.0px;color:#000;"><span class="s2">0,000</span></div>
<div class="c r" style="left:609.4px;top:665px;width:91.6px;color:#000;"><span class="s2">0,00</span></div>
<div class="c r" style="left:701.0px;top:665px;width:111.0px;color:#000;"><span class="s2">10,00</span></div>
<div class="c " style="left:812.0px;top:665px;width:51.5px;color:#000;padding-left:3px;"><span class="s3">Un</span></div>
<div class="abs" style="left:42px;top:684px;width:818px;height:1px;background-image:linear-gradient(90deg,#c4c4c4 50%,transparent 50%);background-size:2px 1px"></div>
<div class="abs" style="left:42px;top:685px;width:818px;height:20px;background:#fff"></div>
<div class="abs" style="left:1.5px;top:685px;width:40.5px;height:20px;background:#e3eaf6;border-bottom:1px solid #9db3cc"></div>
<div class="abs" style="left:42px;top:704px;width:818px;height:1px;background-image:linear-gradient(90deg,#c4c4c4 50%,transparent 50%);background-size:2px 1px"></div>
<div class="abs" style="left:41.5px;top:25px;width:1px;height:665px;background-image:linear-gradient(#c4c4c4 50%,transparent 50%);background-size:1px 2px"></div>
<div class="abs" style="left:143.5px;top:25px;width:1px;height:665px;background-image:linear-gradient(#c4c4c4 50%,transparent 50%);background-size:1px 2px"></div>
<div class="abs" style="left:244.0px;top:25px;width:1px;height:665px;background-image:linear-gradient(#c4c4c4 50%,transparent 50%);background-size:1px 2px"></div>
<div class="abs" style="left:334.5px;top:25px;width:1px;height:665px;background-image:linear-gradient(#c4c4c4 50%,transparent 50%);background-size:1px 2px"></div>
<div class="abs" style="left:426.5px;top:25px;width:1px;height:665px;background-image:linear-gradient(#c4c4c4 50%,transparent 50%);background-size:1px 2px"></div>
<div class="abs" style="left:517.9px;top:25px;width:1px;height:665px;background-image:linear-gradient(#c4c4c4 50%,transparent 50%);background-size:1px 2px"></div>
<div class="abs" style="left:608.9px;top:25px;width:1px;height:665px;background-image:linear-gradient(#c4c4c4 50%,transparent 50%);background-size:1px 2px"></div>
<div class="abs" style="left:700.5px;top:25px;width:1px;height:665px;background-image:linear-gradient(#c4c4c4 50%,transparent 50%);background-size:1px 2px"></div>
<div class="abs" style="left:811.5px;top:25px;width:1px;height:665px;background-image:linear-gradient(#c4c4c4 50%,transparent 50%);background-size:1px 2px"></div>
<div class="abs" style="left:41px;top:645px;width:1px;height:40px;background:#f4a046"></div>
<div class="abs" style="left:43.0px;top:644px;width:101.5px;height:21px;border:2px solid #000"></div>
</div>
<div class="menu" style="left:497px;top:1.5px;width:386px;height:708.0px">
<div class="mi" style="top:2.90px;width:384px;color:#000"><span class="t">Actualiser</span></div>
<div class="sep" style="top:34.40px;width:341px"></div>
<div class="mi" style="top:39.50px;width:384px;color:#000"><span class="t">Déclaration Manuelle (F1)</span></div>
<div class="mi" style="top:66.70px;width:384px;color:#8c8c8c"><span class="t">Déclaration Manuelle Complète (Maj+F1)</span></div>
<div class="mi" style="top:93.90px;width:384px;color:#000"><span class="t">Déclaration Auto. Qté. Cond.</span></div>
<div class="mi" style="top:121.10px;width:384px;color:#000"><span class="t">Déclaration Surplus</span></div>
<div class="mi" style="top:148.30px;width:384px;color:#000"><span class="t">Déclaration Rebut</span></div>
<div class="mi" style="top:175.50px;width:384px;color:#000"><span class="t">Déclaration Retour</span></div>
<div class="mi" style="top:202.70px;width:384px;color:#000"><span class="t">Solde Etape</span></div>
<div class="sep" style="top:234.20px;width:341px"></div>
<div class="mi" style="top:239.30px;width:384px;color:#000"><span class="t">Affectation RL</span></div>
<svg class="abs" style="left:362.6px;top:247.50px" width="8" height="12" viewBox="0 0 8 12"><path d="M1.2 1.3 L5.3 5.5 L1.2 9.7" fill="none" stroke="#606060" stroke-width="1.7"/></svg>
<div class="mi" style="top:266.50px;width:384px;color:#000"><span class="t">Affectation Sous-Traitance</span></div>
<svg class="abs" style="left:362.6px;top:274.70px" width="8" height="12" viewBox="0 0 8 12"><path d="M1.2 1.3 L5.3 5.5 L1.2 9.7" fill="none" stroke="#606060" stroke-width="1.7"/></svg>
<div class="mi" style="top:293.70px;width:384px;color:#000"><span class="t">Affectation Substitution</span></div>
<svg class="abs" style="left:362.6px;top:301.90px" width="8" height="12" viewBox="0 0 8 12"><path d="M1.2 1.3 L5.3 5.5 L1.2 9.7" fill="none" stroke="#606060" stroke-width="1.7"/></svg>
<div class="sep" style="top:325.20px;width:341px"></div>
<div class="mi" style="top:330.30px;width:384px;color:#000"><span class="t">Ordonnancement (F11)</span></div>
<div class="mi" style="top:357.50px;width:384px;color:#000"><span class="t">Reset Ordonnancement (Maj+F11)</span></div>
<div class="sep" style="top:389.00px;width:341px"></div>
<div class="mi" style="top:394.10px;width:384px;color:#000"><span class="t">Informations Suivies (F3)</span></div>
<div class="sep" style="top:425.60px;width:341px"></div>
<div class="mi" style="top:430.70px;width:384px;color:#000"><span class="t">Déclaration Co-Produits</span></div>
<div class="sep" style="top:462.20px;width:341px"></div>
<div class="mi" style="top:467.30px;width:384px;color:#000"><span class="t">Consultation Charge Ressource</span></div>
<svg class="abs" style="left:362.6px;top:475.50px" width="8" height="12" viewBox="0 0 8 12"><path d="M1.2 1.3 L5.3 5.5 L1.2 9.7" fill="none" stroke="#606060" stroke-width="1.7"/></svg>
<div class="abs" style="left:2.7px;top:494.50px;width:375px;height:27.2px;background:#91c9f7"></div>
<div class="abs" style="left:38.2px;top:495.20px;width:201px;height:21.7px;background:#8cc63c"></div>
<div class="mi" style="top:494.50px;width:384px;color:#000"><span class="t">Consultation Charge Famille</span></div>
<svg class="abs" style="left:362.6px;top:502.70px" width="8" height="12" viewBox="0 0 8 12"><path d="M1.2 1.3 L5.3 5.5 L1.2 9.7" fill="none" stroke="#606060" stroke-width="1.7"/></svg>
<div class="sep" style="top:526.00px;width:341px"></div>
<div class="mi" style="top:531.10px;width:384px;color:#000"><span class="t">Détail Car. Technique (F8)</span></div>
<div class="mi" style="top:558.30px;width:384px;color:#000"><span class="t">His. Déc. FAT/ CT (Maj+F10)</span></div>
<div class="mi" style="top:585.50px;width:384px;color:#000"><span class="t">His. Déclarations / OF (F10)</span></div>
<div class="mi" style="top:612.70px;width:384px;color:#000"><span class="t">Visualisation File d&#39;Attente (F12)</span></div>
<div class="sep" style="top:644.20px;width:341px"></div>
<div class="mi" style="top:649.30px;width:384px;color:#000"><span class="t">Définition Filtres et Tris</span></div>
<div class="mi" style="top:676.50px;width:384px;color:#000"><span class="t">Condition par Défaut (Ctrl-F5)</span></div>
</div>
<div class="menu" style="left:874.6px;top:494.2px;width:363px;height:62.4px">
<div class="abs" style="left:2.3px;top:2.7px;width:356px;height:27.1px;background:#91c9f7"></div>
<div class="abs" style="left:38.3px;top:3.8px;width:201.5px;height:20px;background:#8cc63c"></div>
<div class="mi" style="top:2.7px;width:360px"><span class="t" style="left:42px">Consultation Charge Famille</span></div>
<div class="mi" style="top:30.7px;width:360px"><span class="t" style="left:42px">Consultation Charge Famille / Critères</span></div>
</div>
<svg class="abs" style="left:1000px;top:505px" width="24" height="34" viewBox="0 0 24 34"><defs><clipPath id="cy"><rect x="0" y="0" width="24" height="14"/></clipPath></defs><path d="M4 4.5 L4 25.5 L9.3 20.6 L13.3 29.8 L16.3 28.5 L12.3 19.5 L19 19.5Z" fill="#fff"/><path d="M4 4.5 L4 25.5 L9.3 20.6 L13.3 29.8 L16.3 28.5 L12.3 19.5 L19 19.5Z" fill="#ffef00" clip-path="url(#cy)"/><path d="M4 4.5 L4 25.5 L9.3 20.6 L13.3 29.8 L16.3 28.5 L12.3 19.5 L19 19.5Z" fill="none" stroke="#000" stroke-width="1.9" stroke-linejoin="miter"/></svg>
</body></html>
